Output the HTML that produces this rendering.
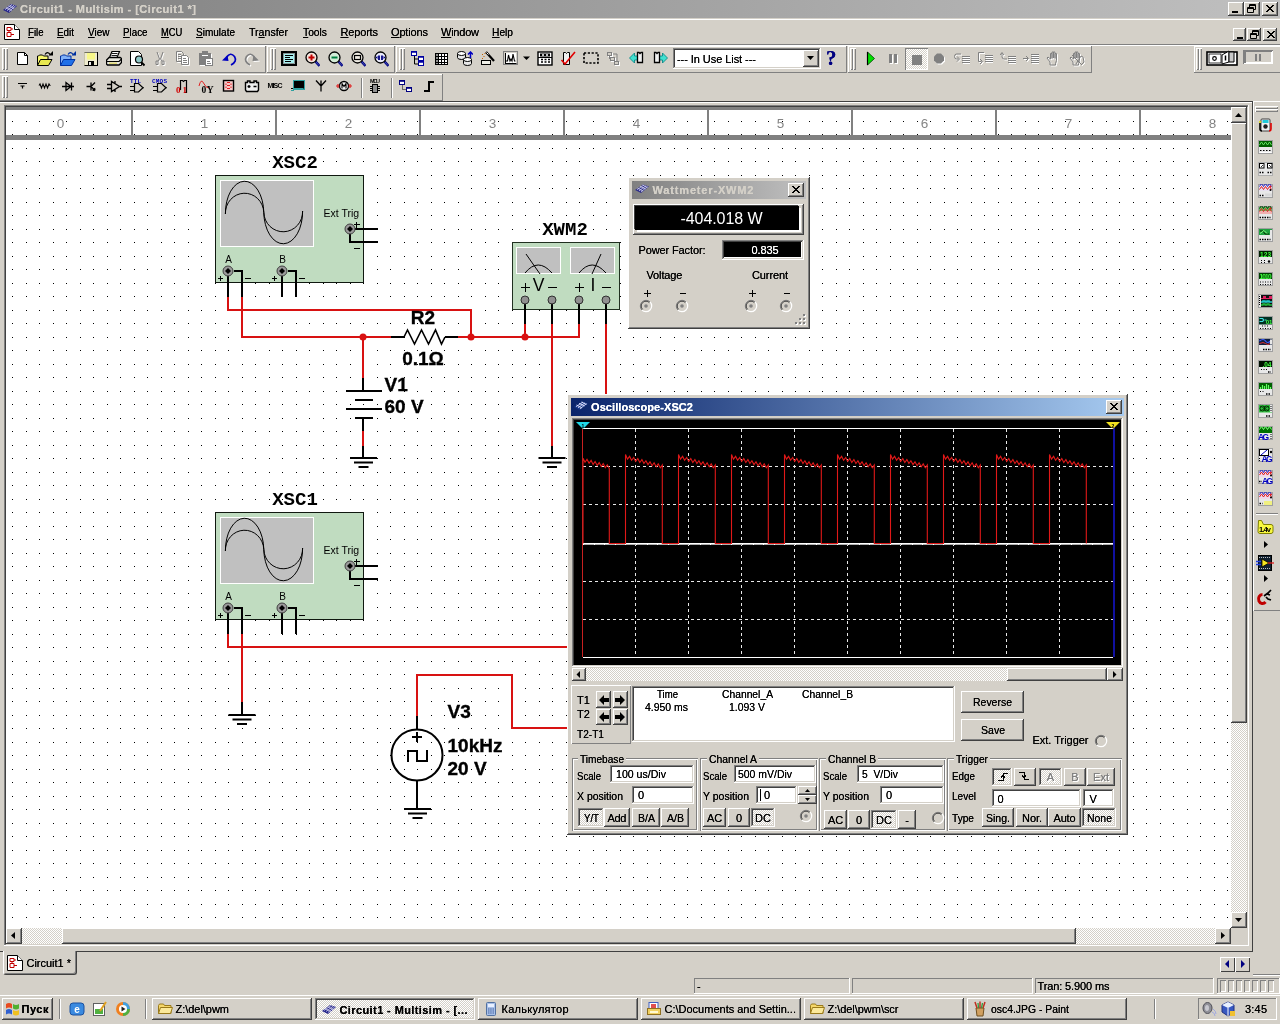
<!DOCTYPE html>
<html lang="ru"><head><meta charset="utf-8"><title>Circuit1 - Multisim</title><style>
html,body{margin:0;padding:0}
body{width:1280px;height:1024px;overflow:hidden;background:#D4D0C8;font-family:"Liberation Sans",sans-serif;font-size:11px;position:relative}
div,span.t,svg{position:absolute}
span.t{white-space:pre;text-shadow:0 0 0 currentColor}
span.t,svg text{opacity:0.999}
u{text-decoration:underline;text-underline-offset:1px}
.r{background:#D4D0C8;box-shadow:inset -1px -1px #404040,inset 1px 1px #fff,inset -2px -2px #808080,inset 2px 2px #D4D0C8}
.s{box-shadow:inset -1px -1px #fff,inset 1px 1px #808080,inset -2px -2px #D4D0C8,inset 2px 2px #404040}
.tb{box-shadow:inset -1px -1px #808080,inset 1px 1px #fff}
.ts{box-shadow:inset -1px -1px #fff,inset 1px 1px #808080}
</style></head>
<body>
<div style="left:0px;top:0px;width:1280px;height:18px;background:linear-gradient(90deg,#808080,#C0C0C0);"></div>
<svg style="left:2px;top:1px" width="16" height="16" viewBox="0 0 16 16"><path d="M1 9 L9 3 L15 5 L7 12 Z" fill="#28288c"/><path d="M3 8.5 L10 3.5 M5 9.5 L12 4.3 M7 10.5 L13.5 5" stroke="#d8d8f0" stroke-width="0.9" fill="none"/><path d="M4 6.5 L10 9.5 M6.5 4.8 L12 7.5" stroke="#d8d8f0" stroke-width="0.7" fill="none"/></svg>
<span class="t" style="font-size:11px;color:#D4D0C8;font-weight:bold;letter-spacing:0.46px;left:20.0px;top:4px;line-height:11px;">Circuit1 - Multisim - [Circuit1 *]</span>
<div class="r" style="left:1228px;top:2px;width:16px;height:14px;"><svg style="left:0;top:0" width="16" height="14" viewBox="0 0 16 14"><rect x="4" y="9" width="6" height="2" fill="#000"/></svg></div>
<div class="r" style="left:1244px;top:2px;width:16px;height:14px;"><svg style="left:0;top:0" width="16" height="14" viewBox="0 0 16 14"><path d="M5.5 2.5h6v5h-6z M5 3.5h7 M3.5 5.5h6v5h-6z M3 6.5h7" stroke="#000" stroke-width="1" fill="none"/><rect x="4" y="7" width="5" height="3" fill="#D4D0C8"/></svg></div>
<div class="r" style="left:1262px;top:2px;width:16px;height:14px;"><svg style="left:0;top:0" width="16" height="14" viewBox="0 0 16 14"><path d="M4 3 L11 10 M5 3 L12 10 M11 3 L4 10 M12 3 L5 10" stroke="#000" stroke-width="1" fill="none" shape-rendering="crispEdges"/></svg></div>
<div style="left:0px;top:18px;width:1280px;height:1px;background:#D4D0C8"></div>
<div style="left:0px;top:19px;width:1280px;height:1px;background:#fff"></div>
<svg style="left:4px;top:24px" width="16" height="16" viewBox="0 0 16 16"><path d="M0.5 0.5h10l5 5v10h-15z" fill="#fff" stroke="#000"/><path d="M10.5 0.5v5h5" fill="#fff" stroke="#000"/><path d="M3 3.5h4v3h-4z M5 6.5v2 M3 8.5h4v4h-4z M7 5h2 M7 10.5h3" stroke="#c00000" fill="none"/></svg>
<span class="t" style="font-size:11px;color:#000;transform:scaleX(0.874);transform-origin:0 0;left:27.5px;top:27px;line-height:11px;"><u>F</u>ile</span>
<span class="t" style="font-size:11px;color:#000;transform:scaleX(0.897);transform-origin:0 0;left:57.0px;top:27px;line-height:11px;"><u>E</u>dit</span>
<span class="t" style="font-size:11px;color:#000;transform:scaleX(0.909);transform-origin:0 0;left:87.5px;top:27px;line-height:11px;"><u>V</u>iew</span>
<span class="t" style="font-size:11px;color:#000;transform:scaleX(0.890);transform-origin:0 0;left:122.5px;top:27px;line-height:11px;"><u>P</u>lace</span>
<span class="t" style="font-size:11px;color:#000;transform:scaleX(0.854);transform-origin:0 0;left:160.6px;top:27px;line-height:11px;"><u>M</u>CU</span>
<span class="t" style="font-size:11px;color:#000;transform:scaleX(0.911);transform-origin:0 0;left:196.0px;top:27px;line-height:11px;"><u>S</u>imulate</span>
<span class="t" style="font-size:11px;color:#000;transform:scaleX(0.962);transform-origin:0 0;left:249.0px;top:27px;line-height:11px;">Tr<u>a</u>nsfer</span>
<span class="t" style="font-size:11px;color:#000;transform:scaleX(0.935);transform-origin:0 0;left:303.0px;top:27px;line-height:11px;"><u>T</u>ools</span>
<span class="t" style="font-size:11px;color:#000;letter-spacing:-0.19px;left:340.6px;top:27px;line-height:11px;"><u>R</u>eports</span>
<span class="t" style="font-size:11px;color:#000;letter-spacing:-0.15px;left:391.0px;top:27px;line-height:11px;"><u>O</u>ptions</span>
<span class="t" style="font-size:11px;color:#000;letter-spacing:-0.23px;left:441.0px;top:27px;line-height:11px;"><u>W</u>indow</span>
<span class="t" style="font-size:11px;color:#000;transform:scaleX(0.928);transform-origin:0 0;left:492.0px;top:27px;line-height:11px;"><u>H</u>elp</span>
<div class="r" style="left:1233px;top:28px;width:13px;height:13px;"><svg style="left:0;top:0" width="13" height="13" viewBox="0 0 13 13"><rect x="4" y="9" width="6" height="2" fill="#000"/></svg></div>
<div class="r" style="left:1247px;top:28px;width:14px;height:13px;"><svg style="left:0;top:0" width="14" height="13" viewBox="0 0 14 13"><path d="M5.5 2.5h6v5h-6z M5 3.5h7 M3.5 5.5h6v5h-6z M3 6.5h7" stroke="#000" stroke-width="1" fill="none"/><rect x="4" y="7" width="5" height="3" fill="#D4D0C8"/></svg></div>
<div class="r" style="left:1263px;top:28px;width:14px;height:13px;"><svg style="left:0;top:0" width="14" height="13" viewBox="0 0 14 13"><path d="M4 3 L11 10 M5 3 L12 10 M11 3 L4 10 M12 3 L5 10" stroke="#000" stroke-width="1" fill="none" shape-rendering="crispEdges"/></svg></div>
<div style="left:0px;top:44px;width:1280px;height:1px;background:#808080"></div>
<div style="left:0px;top:45px;width:1280px;height:1px;background:#fff"></div>
<div class="tb" style="left:-1px;top:46px;width:267px;height:27px;"></div>
<div style="left:2px;top:48px;width:3px;height:22px;box-shadow:inset 1px 1px #fff,inset -1px -1px #808080"></div><div style="left:5px;top:48px;width:3px;height:22px;box-shadow:inset 1px 1px #fff,inset -1px -1px #808080"></div>
<div class="tb" style="left:267px;top:46px;width:128px;height:27px;"></div>
<div style="left:270px;top:48px;width:3px;height:22px;box-shadow:inset 1px 1px #fff,inset -1px -1px #808080"></div><div style="left:273px;top:48px;width:3px;height:22px;box-shadow:inset 1px 1px #fff,inset -1px -1px #808080"></div>
<div class="tb" style="left:396px;top:46px;width:451px;height:27px;"></div>
<div style="left:399px;top:48px;width:3px;height:22px;box-shadow:inset 1px 1px #fff,inset -1px -1px #808080"></div><div style="left:402px;top:48px;width:3px;height:22px;box-shadow:inset 1px 1px #fff,inset -1px -1px #808080"></div>
<div class="tb" style="left:848px;top:46px;width:244px;height:27px;"></div>
<div style="left:850px;top:48px;width:3px;height:22px;box-shadow:inset 1px 1px #fff,inset -1px -1px #808080"></div><div style="left:853px;top:48px;width:3px;height:22px;box-shadow:inset 1px 1px #fff,inset -1px -1px #808080"></div>
<div class="tb" style="left:1194px;top:46px;width:87px;height:27px;"></div>
<div style="left:1196px;top:48px;width:3px;height:22px;box-shadow:inset 1px 1px #fff,inset -1px -1px #808080"></div><div style="left:1199px;top:48px;width:3px;height:22px;box-shadow:inset 1px 1px #fff,inset -1px -1px #808080"></div>
<div class="tb" style="left:-1px;top:74px;width:444px;height:27px;"></div>
<div style="left:2px;top:76px;width:3px;height:22px;box-shadow:inset 1px 1px #fff,inset -1px -1px #808080"></div><div style="left:5px;top:76px;width:3px;height:22px;box-shadow:inset 1px 1px #fff,inset -1px -1px #808080"></div>
<div style="left:361px;top:78px;width:1px;height:20px;background:#808080"></div>
<div style="left:362px;top:78px;width:1px;height:20px;background:#fff"></div>
<div style="left:391px;top:78px;width:1px;height:20px;background:#808080"></div>
<div style="left:392px;top:78px;width:1px;height:20px;background:#fff"></div>
<div style="left:0px;top:101px;width:1253px;height:1px;background:#404040"></div>
<div style="left:0px;top:102px;width:1252px;height:1px;background:#fff"></div>
<div class="s" style="left:673px;top:48px;width:148px;height:21px;background:#fff"></div>
<span class="t" style="font-size:11px;color:#000;letter-spacing:-0.06px;left:677.0px;top:54px;line-height:11px;">--- In Use List ---</span>
<div class="r" style="left:803px;top:50px;width:16px;height:17px;"><svg style="left:0;top:0" width="16" height="17"><path d="M4 6h7l-3.5 4z" fill="#000"/></svg></div>
<div style="left:905px;top:48px;width:23px;height:22px;background:repeating-conic-gradient(#fff 0% 25%,#D4D0C8 0% 50%) 0 0/2px 2px;box-shadow:inset 1px 1px #808080,inset -1px -1px #fff"></div>
<svg style="left:14px;top:51px" width="16" height="16" viewBox="0 0 16 16"><path d="M3.500 1.500h7l3 3v9h-10z" fill="#fff" stroke="#000"/><path d="M10.500 1.500v3h3" fill="none" stroke="#000"/></svg>
<svg style="left:37px;top:51px" width="16" height="16" viewBox="0 0 16 16"><path d="M0.500 14.500v-9.500h1l1-1h3l1 1h4.500v3" fill="#f8f870" stroke="#000"/><path d="M0.500 14.500l3-6h11.500l-3.500 6z" fill="#e8e850" stroke="#000"/><path d="M8 3.500q2.500-4 5.500 0.500" fill="none" stroke="#000" stroke-width="1.200"/><path d="M11.500 4.500h4.500v-4.500z" fill="#000"/></svg>
<svg style="left:60px;top:51px" width="16" height="16" viewBox="0 0 16 16"><path d="M0.500 14.500v-9.500h1l1-1h3l1 1h4.500v3" fill="#80b0f8" stroke="#0030a0"/><path d="M0.500 14.500l3-6h11.500l-3.500 6z" fill="#2070e8" stroke="#0030a0"/><path d="M8 3.500q2.500-4 5.500 0.500" fill="none" stroke="#0030a0" stroke-width="1.200"/><path d="M11.500 4.500h4.500v-4.500z" fill="#0030a0"/></svg>
<svg style="left:83px;top:51px" width="16" height="16" viewBox="0 0 16 16"><rect x="1.500" y="1.500" width="13" height="13" fill="#f0ecd0" stroke="#707060"/><path d="M14.500 1v14M1 14.500h14" stroke="#000"/><path d="M1.500 1.500v13" stroke="#c8c4a8"/><rect x="4" y="2" width="8" height="6.500" fill="#f8f888"/><rect x="5" y="10" width="6" height="4.500" fill="#000"/><rect x="6" y="11" width="2" height="3" fill="#e8e8e8"/></svg>
<svg style="left:106px;top:51px" width="16" height="16" viewBox="0 0 16 16"><path d="M3.500 6.500l2.500-6h7.500l-2.500 6z" fill="#fff" stroke="#000" stroke-width="1.200"/><path d="M6 2.500h5.500M5.500 4.500h5.500" stroke="#000" stroke-width="0.900"/><path d="M0.600 9l2.500-2.500h11l1.400 1v4l-2.500 2.500h-11.500l-1-1z" fill="#e8e8e0" stroke="#000" stroke-width="1.300"/><path d="M1 10.500h12M13 10.500l2.500-2.500" stroke="#000" stroke-width="1.100"/><path d="M3 12.200h8" stroke="#e0d860" stroke-width="1.200"/></svg>
<svg style="left:129px;top:51px" width="16" height="16" viewBox="0 0 16 16"><path d="M1.500 0.500h8l3 3v11h-11z" fill="#fff" stroke="#000"/><circle cx="10" cy="8.500" r="3.500" fill="#90c8c8" stroke="#000" stroke-width="1.200"/><path d="M12.500 11.500l3 3" stroke="#000" stroke-width="2"/></svg>
<svg style="left:152px;top:51px" width="16" height="16" viewBox="0 0 16 16"><path d="M5 1l2.500 7M11 1l-2.500 7M7.500 8l-1.500 2M8.500 8l1.500 2" transform="translate(1,1)" stroke="#fff" stroke-width="1" fill="none"/><path d="M5 1l2.500 7M11 1l-2.500 7M7.500 8l-1.500 2M8.500 8l1.500 2" stroke="#808080" stroke-width="1" fill="none"/><path d="M4 10h2v3.500h-2zM10 10h2v3.500h-2z" transform="translate(1,1)" stroke="#fff" stroke-width="1" fill="none"/><path d="M4 10h2v3.500h-2zM10 10h2v3.500h-2z" stroke="#808080" stroke-width="1" fill="none"/></svg>
<svg style="left:175px;top:51px" width="16" height="16" viewBox="0 0 16 16"><path d="M1.500 0.500h5l2 2v8h-7zM3 3.500h3M3 5.500h4M3 7.500h4" transform="translate(1,1)" stroke="#fff" stroke-width="1" fill="none"/><path d="M1.500 0.500h5l2 2v8h-7zM3 3.500h3M3 5.500h4M3 7.500h4" stroke="#808080" stroke-width="1" fill="none"/><path d="M6.500 4.500h5l2 2v7h-7z" fill="#fff"/><path d="M6.500 4.500h5l2 2v7h-7zM8 7.500h3M8 9.500h4M8 11.500h4" transform="translate(1,1)" stroke="#fff" stroke-width="1" fill="none"/><path d="M6.500 4.500h5l2 2v7h-7zM8 7.500h3M8 9.500h4M8 11.500h4" stroke="#808080" stroke-width="1" fill="none"/></svg>
<svg style="left:198px;top:51px" width="16" height="16" viewBox="0 0 16 16"><rect x="2" y="3" width="12" height="12" fill="#fff"/><rect x="1" y="2" width="12" height="12" fill="#808080"/><rect x="4.500" y="0.500" width="5" height="3" fill="#808080" stroke="#808080"/><path d="M4 4.500h6" stroke="#fff"/><rect x="7.500" y="7.500" width="7" height="7" fill="#fff" stroke="#808080"/><path d="M9 10.500h3M9 12.500h4" stroke="#808080"/></svg>
<svg style="left:221px;top:51px" width="16" height="16" viewBox="0 0 16 16"><path d="M5.500 6.500q4-6 8-1q3 5-3.500 8.500" fill="none" stroke="#0000c0" stroke-width="1.700"/><path d="M1 9.500l5.500-5.500l1 6z" fill="#0000c0"/></svg>
<svg style="left:244px;top:51px" width="16" height="16" viewBox="0 0 16 16"><path d="M11.500 7.500q-4-6-8-1q-3 5 3.500 8.500" fill="none" stroke="#fff" stroke-width="1.700"/><path d="M16 10.500l-5.500-5.500l-1 6z" fill="#fff"/><path d="M10.500 6.500q-4-6-8-1q-3 5 3.500 8.500" fill="none" stroke="#808080" stroke-width="1.700"/><path d="M15 9.500l-5.500-5.500l-1 6z" fill="#808080"/></svg>
<svg style="left:281px;top:51px" width="16" height="16" viewBox="0 0 16 16"><rect x="1" y="1" width="14" height="13" fill="#a8f0f0" stroke="#000" stroke-width="2"/><rect x="2.500" y="2.500" width="11" height="10" fill="none" stroke="#808080" stroke-width="0.800"/><path d="M4 4.500h8M4 6.500h5M4 8.500h8M4 10.500h6" stroke="#000" stroke-width="1.100"/></svg>
<svg style="left:304px;top:51px" width="16" height="16" viewBox="0 0 16 16"><path d="M11.500 10.500l4 4.500" stroke="#000080" stroke-width="2.600"/><path d="M12 11l3 3.500" stroke="#5060c0" stroke-width="0.800"/><circle cx="7.500" cy="6.500" r="5.500" fill="#f4e4dc" stroke="#000" stroke-width="1.300"/><path d="M4.500 6.500h6M7.500 3.500v6" stroke="#c00000" stroke-width="2"/></svg>
<svg style="left:327px;top:51px" width="16" height="16" viewBox="0 0 16 16"><path d="M11.500 10.500l4 4.500" stroke="#000080" stroke-width="2.600"/><path d="M12 11l3 3.500" stroke="#5060c0" stroke-width="0.800"/><circle cx="7.500" cy="6.500" r="5.500" fill="#d4ecd8" stroke="#000" stroke-width="1.300"/><path d="M4.500 6.500h6" stroke="#008040" stroke-width="2"/></svg>
<svg style="left:350px;top:51px" width="16" height="16" viewBox="0 0 16 16"><path d="M11.500 10.500l4 4.500" stroke="#000080" stroke-width="2.600"/><path d="M12 11l3 3.500" stroke="#5060c0" stroke-width="0.800"/><circle cx="7.500" cy="6.500" r="5.500" fill="#f0ece4" stroke="#000" stroke-width="1.300"/><rect x="4.500" y="4.500" width="6" height="4" fill="none" stroke="#000" stroke-width="1.200"/></svg>
<svg style="left:373px;top:51px" width="16" height="16" viewBox="0 0 16 16"><path d="M11.500 10.500l4 4.500" stroke="#000080" stroke-width="2.600"/><path d="M12 11l3 3.500" stroke="#5060c0" stroke-width="0.800"/><circle cx="7.500" cy="6.500" r="5.500" fill="#e8e8f8" stroke="#000" stroke-width="1.300"/><path d="M6 4.500v4.500M9 4.500v4.500" stroke="#000080" stroke-width="1.800"/><path d="M4.500 5l-2 1.500l2 1.500zM10.500 5l2 1.500l-2 1.500z" fill="#000080"/></svg>
<svg style="left:410px;top:51px" width="16" height="16" viewBox="0 0 16 16"><rect x="1.5" y="0.5" width="5" height="4" fill="#fff" stroke="#0000a0"/><path d="M1.5 1.0h5" stroke="#0000a0" stroke-width="1.500"/><rect x="8.5" y="5.5" width="5" height="4" fill="#fff" stroke="#0000a0"/><path d="M8.5 6.0h5" stroke="#0000a0" stroke-width="1.500"/><rect x="8.5" y="10.5" width="5" height="4" fill="#fff" stroke="#0000a0"/><path d="M8.5 11.0h5" stroke="#0000a0" stroke-width="1.500"/><path d="M4.500 5v8h4M4.500 8h4" fill="none" stroke="#000"/></svg>
<svg style="left:434px;top:51px" width="16" height="16" viewBox="0 0 16 16"><rect x="1" y="2" width="13" height="12" fill="#000"/><g fill="#fff"><rect x="5" y="3" width="2" height="2"/><rect x="8" y="3" width="2" height="2"/><rect x="11" y="3" width="2" height="2"/><rect x="5" y="6" width="2" height="2"/><rect x="8" y="6" width="2" height="2"/><rect x="11" y="6" width="2" height="2"/><rect x="5" y="9" width="2" height="2"/><rect x="8" y="9" width="2" height="2"/><rect x="11" y="9" width="2" height="2"/><rect x="5" y="12" width="2" height="1"/><rect x="8" y="12" width="2" height="1"/><rect x="11" y="12" width="2" height="1"/></g><g fill="#909090"><rect x="2" y="3" width="2" height="2"/><rect x="2" y="6" width="2" height="2"/><rect x="2" y="9" width="2" height="2"/><rect x="2" y="12" width="2" height="1"/></g></svg>
<svg style="left:457px;top:51px" width="16" height="16" viewBox="0 0 16 16"><path d="M0.5 2.5v4a4 2 0 0 0 8 0v-4" fill="#e8e8e8" stroke="#000"/><ellipse cx="4.5" cy="2.5" rx="4" ry="2" fill="#fff" stroke="#000"/><path d="M6.5 8.5v4a4 2 0 0 0 8 0v-4" fill="#e8e8e8" stroke="#000"/><ellipse cx="10.5" cy="8.5" rx="4" ry="2" fill="#fff" stroke="#000"/><path d="M13.500 7v-5M11 3.500l2.500-2.500l2.500 2.500" fill="none" stroke="#0000c0" stroke-width="1.500"/></svg>
<svg style="left:480px;top:51px" width="16" height="16" viewBox="0 0 16 16"><path d="M6 1l8 9" stroke="#000" stroke-width="2.200"/><path d="M6.500 1.500l2 2" stroke="#fff" stroke-width="1"/><rect x="1.500" y="9.500" width="9" height="4" fill="#f0f0e8" stroke="#000"/><path d="M2 3.500h1M3.500 5.500h1M2 7.500h1M4.500 2.500h1" stroke="#c06000"/></svg>
<svg style="left:503px;top:51px" width="16" height="16" viewBox="0 0 16 16"><rect x="0.500" y="0.500" width="14" height="13" fill="#d4d0c8" stroke="#808080"/><rect x="2" y="2" width="11" height="10" fill="#fff"/><path d="M2 12.500h11.500M2.500 2v10.500" stroke="#000"/><path d="M3 10l1.500 0l1-6l1.500 6l1-2l1 2l1-7l1.500 7h1" fill="none" stroke="#000" stroke-width="1.100"/></svg>
<svg style="left:522px;top:54px" width="9" height="8" viewBox="0 0 9 8"><path d="M1 2.500h7l-3.500 3.500z" fill="#000"/></svg>
<svg style="left:537px;top:51px" width="16" height="16" viewBox="0 0 16 16"><rect x="1" y="1" width="14" height="13" fill="#fff" stroke="#000" stroke-width="1.400"/><rect x="3" y="2.500" width="10" height="3" fill="#000"/><circle cx="6" cy="4" r="1" fill="#fff"/><circle cx="10" cy="4" r="1" fill="#fff"/><path d="M1 6.500h14" stroke="#000"/><path d="M4 8.500h2M7.500 8.500h2M11 8.500h2M4 11h2M7.500 11h2M11 11h2" stroke="#000" stroke-width="1.600"/></svg>
<svg style="left:560px;top:51px" width="16" height="16" viewBox="0 0 16 16"><path d="M3.500 1.500h2l1 1l1-1h2v12h-6z" fill="#f0f0f0" stroke="#000"/><path d="M1.500 9l3.500 4l10-12" fill="none" stroke="#e00000" stroke-width="1.600"/></svg>
<svg style="left:583px;top:51px" width="16" height="16" viewBox="0 0 16 16"><rect x="1" y="2" width="14" height="10" fill="none" stroke="#000" stroke-width="1.600" stroke-dasharray="2.200 1.600"/></svg>
<svg style="left:606px;top:51px" width="16" height="16" viewBox="0 0 16 16"><rect x="2.5" y="2.5" width="4" height="3" fill="none" stroke="#fff"/><rect x="1.5" y="1.5" width="4" height="3" fill="#d4d0c8" stroke="#808080"/><rect x="5.5" y="7.5" width="4" height="3" fill="none" stroke="#fff"/><rect x="4.5" y="6.5" width="4" height="3" fill="#d4d0c8" stroke="#808080"/><rect x="9.5" y="11.5" width="4" height="3" fill="none" stroke="#fff"/><rect x="8.5" y="10.5" width="4" height="3" fill="#d4d0c8" stroke="#808080"/><path d="M7 3h4v7" fill="none" stroke="#808080"/><path d="M3.500 5v3" stroke="#808080"/></svg>
<svg style="left:629px;top:51px" width="16" height="16" viewBox="0 0 16 16"><path d="M0.500 7l5-5v3h4v4h-4v3z" fill="#40e0d0" stroke="#008080" stroke-width="0.800"/><path d="M8.500 1.500h1.500l1 1l1-1h1.500v10h-5z" fill="#f0f0f0" stroke="#000" stroke-width="1.300"/></svg>
<svg style="left:652px;top:51px" width="16" height="16" viewBox="0 0 16 16"><path d="M15.500 7l-5-5v3h-4v4h4v3z" fill="#40e0d0" stroke="#008080" stroke-width="0.800"/><path d="M2.500 1.500h1.500l1 1l1-1h1.500v10h-5z" fill="#f0f0f0" stroke="#000" stroke-width="1.300"/></svg>
<span class="t" style="font-size:21px;color:#000080;font-weight:bold;left:826.1px;top:48px;line-height:21px;font-family:'Liberation Serif',serif;">?</span>
<svg style="left:866px;top:51px" width="10" height="16" viewBox="0 0 10 16"><path d="M1.500 1l7 6.500l-7 6.500z" fill="#00e000" stroke="#004000" stroke-width="0.800"/><path d="M1.500 1v13" stroke="#000" stroke-width="1.200"/></svg>
<svg style="left:888px;top:53px" width="11" height="12" viewBox="0 0 11 12"><rect x="2" y="2" width="3" height="9" fill="#fff"/><rect x="7" y="2" width="3" height="9" fill="#fff"/><rect x="1" y="1" width="3" height="9" fill="#808080"/><rect x="6" y="1" width="3" height="9" fill="#808080"/></svg>
<svg style="left:911px;top:54px" width="12" height="12" viewBox="0 0 12 12"><rect x="1" y="1" width="10" height="10" fill="#808080"/></svg>
<svg style="left:932px;top:51px" width="15" height="16" viewBox="0 0 15 16"><path d="M6 3.500h4l3 3v4l-3 3h-4l-3-3v-4z" fill="#fff"/><path d="M5 2.500h4l3 3v4l-3 3h-4l-3-3v-4z" fill="#808080"/></svg>
<svg style="left:954px;top:51px" width="16" height="16" viewBox="0 0 16 16"><path d="M7 3h-4.500q-2 0-2 2.500t2 2.500h2M3 5.500l2.500 2.500l-2.500 2.500 M8 5.500h8M8 7.500h8M8 9.500h8M8 11.500h8" transform="translate(1,1)" stroke="#fff" stroke-width="1" fill="none"/><path d="M7 3h-4.500q-2 0-2 2.500t2 2.500h2M3 5.500l2.500 2.500l-2.500 2.500 M8 5.500h8M8 7.500h8M8 9.500h8M8 11.500h8" stroke="#808080" stroke-width="1" fill="none"/></svg>
<svg style="left:977px;top:51px" width="16" height="16" viewBox="0 0 16 16"><path d="M7 1.500h-5.500v9h3M3 8l2.500 2.500l-2.500 2.500 M8 4.500h8M8 6.500h8M8 8.500h8M8 10.500h8" transform="translate(1,1)" stroke="#fff" stroke-width="1" fill="none"/><path d="M7 1.500h-5.500v9h3M3 8l2.500 2.500l-2.500 2.500 M8 4.500h8M8 6.500h8M8 8.500h8M8 10.500h8" stroke="#808080" stroke-width="1" fill="none"/></svg>
<svg style="left:1000px;top:51px" width="16" height="16" viewBox="0 0 16 16"><path d="M7 8h-3q-2 0-2-2.500v-3.500M0 4l2-2.500l2 2.500 M8 5.500h8M8 7.500h8M8 9.500h8M8 11.500h8" transform="translate(1,1)" stroke="#fff" stroke-width="1" fill="none"/><path d="M7 8h-3q-2 0-2-2.500v-3.500M0 4l2-2.500l2 2.500 M8 5.500h8M8 7.500h8M8 9.500h8M8 11.500h8" stroke="#808080" stroke-width="1" fill="none"/></svg>
<svg style="left:1023px;top:51px" width="16" height="16" viewBox="0 0 16 16"><path d="M0 7.500h5M3 5l2.500 2.500l-2.500 2.500 M8 3.500h8M8 5.500h8M8 7.500h8M8 9.500h8M8 11.500h8" transform="translate(1,1)" stroke="#fff" stroke-width="1" fill="none"/><path d="M0 7.500h5M3 5l2.500 2.500l-2.500 2.500 M8 3.500h8M8 5.500h8M8 7.500h8M8 9.500h8M8 11.500h8" stroke="#808080" stroke-width="1" fill="none"/></svg>
<svg style="left:1046px;top:51px" width="16" height="16" viewBox="0 0 16 16"><path d="M4 14v-3l-3-4l1-1l2.500 2v-5.500h1.500v5v-6.500h1.500v6v-6h1.500v6.500v-5h1.500v7l-1 3v1.500z" transform="translate(1,1)" stroke="#fff" stroke-width="1" fill="none"/><path d="M4 14v-3l-3-4l1-1l2.500 2v-5.500h1.500v5v-6.500h1.500v6v-6h1.500v6.500v-5h1.500v7l-1 3v1.500z" stroke="#808080" stroke-width="1" fill="none"/></svg>
<svg style="left:1069px;top:51px" width="16" height="16" viewBox="0 0 16 16"><path d="M4 14v-3l-3-4l1-1l2.500 2v-5.500h1.500v5v-6.500h1.500v6v-6h1.500v6.500v-5h1.500v7l-1 3v1.500z M7 13l5-8l2 1l1 5l-3 3 M3 4l9 9" transform="translate(1,1)" stroke="#fff" stroke-width="1" fill="none"/><path d="M4 14v-3l-3-4l1-1l2.500 2v-5.500h1.500v5v-6.500h1.500v6v-6h1.500v6.500v-5h1.500v7l-1 3v1.500z M7 13l5-8l2 1l1 5l-3 3 M3 4l9 9" stroke="#808080" stroke-width="1" fill="none"/></svg>
<svg style="left:1206px;top:50px" width="32" height="17" viewBox="0 0 32 17"><rect x="1" y="2" width="30" height="13" fill="#fff" stroke="#000" stroke-width="1.600"/><rect x="3" y="4" width="12" height="9" fill="#fff" stroke="#000" stroke-width="0.800"/><circle cx="8.500" cy="8.500" r="1.800" fill="none" stroke="#000" stroke-width="1.200"/><path d="M16 5l7-4v11l-7 2z" fill="#fff" stroke="#000"/><path d="M19.500 5.500v5" stroke="#000" stroke-width="1.500"/><path d="M23 2h5v10h-5z" fill="#c8c8c8" stroke="#000"/></svg>
<div style="left:1243px;top:50px;width:30px;height:14px;box-shadow:inset 1px 1px #808080,inset -1px -1px #fff,inset 3px 2px #808080,inset -2px -2px #fff"></div>
<div style="left:1255px;top:54px;width:2px;height:7px;background:#808080"></div>
<div style="left:1259px;top:54px;width:2px;height:7px;background:#808080"></div>
<svg style="left:14px;top:78px" width="16" height="16" viewBox="0 0 16 16"><path d="M4 5.500h9M6.500 8h4M8.500 8v2.500" fill="none" stroke="#000" stroke-width="1.2"/></svg>
<svg style="left:37px;top:78px" width="16" height="16" viewBox="0 0 16 16"><path d="M2 7.500l1-1.500l1.500 4l1.500-4l1.500 4l1.500-4l1.500 4l1.500-4l1 1.500h0.500" fill="none" stroke="#000" stroke-width="1.1"/></svg>
<svg style="left:60px;top:78px" width="16" height="16" viewBox="0 0 16 16"><path d="M2 8.500h12M6 4.500v8l5-4zM11.500 4.500v8" fill="none" stroke="#000" stroke-width="1.3"/></svg>
<svg style="left:83px;top:78px" width="16" height="16" viewBox="0 0 16 16"><path d="M3.500 8.500h4.500M8 4.500v8M8 8.500l4-4M8 8.500l4 4M12 12.500l-2.500-0.500M12 12.500l-0.500-2.500" fill="none" stroke="#000" stroke-width="1.3"/></svg>
<svg style="left:106px;top:78px" width="16" height="16" viewBox="0 0 16 16"><path d="M1 6.500h4M1 10.500h4M5.500 3.500v10l8-5zM13.500 8.500h2.500M9 3v2.500M9 14v-2.500" fill="none" stroke="#000" stroke-width="1.3"/></svg>
<svg style="left:129px;top:78px" width="16" height="16" viewBox="0 0 16 16"><path d="M1 8.500h4M1 12.500h4M5.500 5.500v8.500h4l4.500-4.250l-4.500-4.250zM14 9.750h1" fill="none" stroke="#000" stroke-width="1.2"/><text x="1" y="4.500" font-size="6" font-weight="bold" fill="#0000c0" font-family="Liberation Mono, monospace" textLength="11">TTL</text></svg>
<svg style="left:152px;top:78px" width="16" height="16" viewBox="0 0 16 16"><path d="M1 8.500h4M1 12.500h4M5.500 5.500v8.500h4l4.500-4.250l-4.500-4.250zM14 9.750h1" fill="none" stroke="#000" stroke-width="1.2"/><text x="0" y="4.500" font-size="6" font-weight="bold" fill="#0000c0" font-family="Liberation Mono, monospace" textLength="15">CMOS</text></svg>
<svg style="left:175px;top:79px" width="16" height="16" viewBox="0 0 16 16"><path d="M5.500 11v-9.500h2l1 1l1-1h2v12h-2" fill="none" stroke="#000" stroke-width="1.2"/><text x="1" y="14" font-size="9" font-weight="bold" fill="#d00000" font-family="Liberation Serif, serif" textLength="11">01</text></svg>
<svg style="left:198px;top:79px" width="16" height="16" viewBox="0 0 16 16"><path d="M1 7q2-8 4.500-3t5 5" fill="none" stroke="#e02020" stroke-width="1"/><text x="3.500" y="14" font-size="9.500" font-weight="bold" fill="#000" font-family="Liberation Serif, serif" textLength="12">0Y</text></svg>
<svg style="left:221px;top:79px" width="16" height="16" viewBox="0 0 16 16"><rect x="2.500" y="1.500" width="10" height="10.500" fill="#f4c8c8" stroke="#000" stroke-width="1.400"/><path d="M6 3.500h3M6 6.500h3M6 9.500h3M5 4.500v1.500M10 4.500v1.500M5 7.500v1.500M10 7.500v1.500" fill="none" stroke="#e02020" stroke-width="1"/></svg>
<svg style="left:244px;top:79px" width="16" height="16" viewBox="0 0 16 16"><path d="M1.500 3.500h2v-1.500h2.500v1.500h4v-1.500h2.500v1.500h2v7.500l-1 1.500h-11l-1-1.500z" fill="#f0f0f0" stroke="#000" stroke-width="1.400"/><path d="M3.500 7.500h3M5 6v3M9.500 7.500h3" fill="none" stroke="#000" stroke-width="1.3"/></svg>
<svg style="left:267px;top:78px" width="16" height="16" viewBox="0 0 16 16"><text x="0.500" y="9.500" font-size="7" font-weight="bold" fill="#000" font-family="Liberation Sans, sans-serif" textLength="15">MISC</text></svg>
<svg style="left:290px;top:79px" width="16" height="16" viewBox="0 0 16 16"><rect x="3.500" y="1.500" width="11" height="9" fill="#000" stroke="#30a0a0" stroke-width="1"/><path d="M1 11.500h3M3.500 9.500h10" stroke="#30a0a0"/><path d="M1 9.500h2" stroke="#000"/></svg>
<svg style="left:313px;top:79px" width="16" height="16" viewBox="0 0 16 16"><path d="M8 1.500v11M8 7l-5-5.500M8 7l5-5.500" fill="none" stroke="#000" stroke-width="1.3"/></svg>
<svg style="left:336px;top:79px" width="16" height="16" viewBox="0 0 16 16"><circle cx="8" cy="7" r="4.500" fill="#f0f0f0" stroke="#000" stroke-width="1.300"/><path d="M0 7h3.500M12.500 7h3.500M2 5v4M14 5v4" fill="none" stroke="#e02020" stroke-width="1.2"/><path d="M6 9.500v-5l2 3l2-3v5" fill="none" stroke="#000" stroke-width="1.1"/></svg>
<svg style="left:367px;top:78px" width="16" height="16" viewBox="0 0 16 16"><text x="8" y="4.500" font-size="5.500" font-weight="bold" text-anchor="middle" font-family="Liberation Sans, sans-serif" textLength="10">MCU</text><rect x="5.500" y="6.500" width="5" height="8" fill="#909090" stroke="#000"/><path d="M3 8.500h2M3 10.500h2M3 12.500h2M11 8.500h2M11 10.500h2M11 12.500h2" fill="none" stroke="#000" stroke-width="1.2"/></svg>
<svg style="left:398px;top:79px" width="16" height="16" viewBox="0 0 16 16"><rect x="1.5" y="1.5" width="5" height="4" fill="#fff" stroke="#000080"/><path d="M1.5 2.0h5" stroke="#000080" stroke-width="1.600"/><rect x="8.5" y="8.5" width="5" height="4" fill="#fff" stroke="#000080"/><path d="M8.5 9.0h5" stroke="#000080" stroke-width="1.600"/><path d="M4.500 6.500v4h4" fill="none" stroke="#000" stroke-dasharray="1 1"/></svg>
<svg style="left:421px;top:79px" width="16" height="16" viewBox="0 0 16 16"><path d="M13 3h-5v9h-5" fill="none" stroke="#000" stroke-width="2.200" shape-rendering="crispEdges"/></svg>
<div style="left:4px;top:105px;width:1244px;height:840px;background:#808080"></div>
<div style="left:5px;top:106px;width:1242px;height:838px;background:#404040"></div>
<div style="left:6px;top:107px;width:1241px;height:837px;background:#D4D0C8"></div>
<div style="left:6px;top:944px;width:1242px;height:1px;background:#D4D0C8"></div>
<div style="left:1247px;top:107px;width:1px;height:838px;background:#D4D0C8"></div>
<div style="left:4px;top:945px;width:1245px;height:1px;background:#fff"></div>
<div style="left:1248px;top:105px;width:1px;height:841px;background:#fff"></div>
<div style="left:77px;top:951px;width:1176px;height:1px;background:#404040"></div>
<div style="left:0px;top:951px;width:3px;height:1px;background:#404040"></div>
<div style="left:1252px;top:102px;width:1px;height:850px;background:#404040"></div>
<svg style="left:6px;top:107px" width="1225" height="821" viewBox="6 107 1225 821">
<defs><pattern id="gd" width="27" height="27" patternUnits="userSpaceOnUse"><rect x="12" y="13" width="1" height="1" fill="#000"/><rect x="26" y="13" width="1" height="1" fill="#000"/><rect x="12" y="26" width="1" height="1" fill="#000"/><rect x="26" y="26" width="1" height="1" fill="#000"/></pattern></defs>
<rect x="6" y="107" width="1225" height="821" fill="#fff"/>
<g shape-rendering="crispEdges">
<rect x="6" y="107" width="1225" height="821" fill="url(#gd)"/>
<rect x="6" y="107" width="1225" height="3" fill="#808080"/>
<rect x="6" y="135" width="1225" height="5" fill="#808080"/>
<rect x="131" y="110" width="2" height="25" fill="#808080"/>
<rect x="275" y="110" width="2" height="25" fill="#808080"/>
<rect x="419" y="110" width="2" height="25" fill="#808080"/>
<rect x="563" y="110" width="2" height="25" fill="#808080"/>
<rect x="707" y="110" width="2" height="25" fill="#808080"/>
<rect x="851" y="110" width="2" height="25" fill="#808080"/>
<rect x="995" y="110" width="2" height="25" fill="#808080"/>
<rect x="1139" y="110" width="2" height="25" fill="#808080"/>
</g>
<text x="60.5" y="128" font-size="13.5" fill="#858585" text-anchor="middle" font-family="Liberation Sans, sans-serif">0</text>
<text x="204.5" y="128" font-size="13.5" fill="#858585" text-anchor="middle" font-family="Liberation Sans, sans-serif">1</text>
<text x="348.5" y="128" font-size="13.5" fill="#858585" text-anchor="middle" font-family="Liberation Sans, sans-serif">2</text>
<text x="492.5" y="128" font-size="13.5" fill="#858585" text-anchor="middle" font-family="Liberation Sans, sans-serif">3</text>
<text x="636.5" y="128" font-size="13.5" fill="#858585" text-anchor="middle" font-family="Liberation Sans, sans-serif">4</text>
<text x="780.5" y="128" font-size="13.5" fill="#858585" text-anchor="middle" font-family="Liberation Sans, sans-serif">5</text>
<text x="924.5" y="128" font-size="13.5" fill="#858585" text-anchor="middle" font-family="Liberation Sans, sans-serif">6</text>
<text x="1068.5" y="128" font-size="13.5" fill="#858585" text-anchor="middle" font-family="Liberation Sans, sans-serif">7</text>
<text x="1212.5" y="128" font-size="13.5" fill="#858585" text-anchor="middle" font-family="Liberation Sans, sans-serif">8</text>
<rect x="215.5" y="175.5" width="148" height="107" fill="#C0DCC0" stroke="#101810" shape-rendering="crispEdges"/>
<rect x="220.5" y="180.5" width="93" height="66" fill="#C0C0C0" stroke="#fff" shape-rendering="crispEdges"/>
<path d="M225.4 214 A19.2 32 0 0 1 263.8 212.5 A19.4 32 0 0 0 302.6 211" fill="none" stroke="#000" stroke-width="1"/>
<path d="M225.4 214 A19.2 20 0 0 1 263.8 212.5 A19.4 20 0 0 0 302.6 211" fill="none" stroke="#000" stroke-width="1"/>
<text x="295" y="168" font-size="19" text-anchor="middle" font-weight="bold" font-family="Liberation Mono, monospace" fill="#000">XSC2</text>
<text x="228.5" y="262.5" font-size="10" text-anchor="middle" font-family="Liberation Sans, sans-serif" fill="#000">A</text>
<text x="282.5" y="262.5" font-size="10" text-anchor="middle" font-family="Liberation Sans, sans-serif" fill="#000">B</text>
<text x="323.5" y="216.5" font-size="10.5" text-anchor="start" font-family="Liberation Sans, sans-serif" fill="#000">Ext Trig</text>
<g stroke="#000" stroke-width="2" fill="none" shape-rendering="crispEdges">
<path d="M228 271V297 M234 271H242V297 M282 271V297 M288 271H296V297"/>
<path d="M350 229H378 M350 229V242H378"/>
</g>
<circle cx="228" cy="271" r="5" fill="#9a9a9a" stroke="#404040" stroke-width="1"/><path d="M225 271L228 268L231 271L228 274z" fill="#000"/>
<circle cx="282" cy="271" r="5" fill="#9a9a9a" stroke="#404040" stroke-width="1"/><path d="M279 271L282 268L285 271L282 274z" fill="#000"/>
<circle cx="350" cy="229" r="5" fill="#9a9a9a" stroke="#404040" stroke-width="1"/><path d="M347 229L350 226L353 229L350 232z" fill="#000"/>
<g stroke="#000" stroke-width="1" shape-rendering="crispEdges">
<path d="M218 278.5h5 M220.5 276v5"/>
<path d="M272 278.5h5 M274.5 276v5"/>
<path d="M245 278.5h6"/>
<path d="M299 278.5h6"/>
<path d="M354 224.5h6 M356.5 222v6 M354 248.5h6"/>
</g>
<rect x="215.5" y="512.5" width="148" height="107" fill="#C0DCC0" stroke="#101810" shape-rendering="crispEdges"/>
<rect x="220.5" y="517.5" width="93" height="66" fill="#C0C0C0" stroke="#fff" shape-rendering="crispEdges"/>
<path d="M225.4 551 A19.2 32 0 0 1 263.8 549.5 A19.4 32 0 0 0 302.6 548" fill="none" stroke="#000" stroke-width="1"/>
<path d="M225.4 551 A19.2 20 0 0 1 263.8 549.5 A19.4 20 0 0 0 302.6 548" fill="none" stroke="#000" stroke-width="1"/>
<text x="295" y="505" font-size="19" text-anchor="middle" font-weight="bold" font-family="Liberation Mono, monospace" fill="#000">XSC1</text>
<text x="228.5" y="599.5" font-size="10" text-anchor="middle" font-family="Liberation Sans, sans-serif" fill="#000">A</text>
<text x="282.5" y="599.5" font-size="10" text-anchor="middle" font-family="Liberation Sans, sans-serif" fill="#000">B</text>
<text x="323.5" y="553.5" font-size="10.5" text-anchor="start" font-family="Liberation Sans, sans-serif" fill="#000">Ext Trig</text>
<g stroke="#000" stroke-width="2" fill="none" shape-rendering="crispEdges">
<path d="M228 608V634 M234 608H242V634 M282 608V634 M288 608H296V634"/>
<path d="M350 566H378 M350 566V579H378"/>
</g>
<circle cx="228" cy="608" r="5" fill="#9a9a9a" stroke="#404040" stroke-width="1"/><path d="M225 608L228 605L231 608L228 611z" fill="#000"/>
<circle cx="282" cy="608" r="5" fill="#9a9a9a" stroke="#404040" stroke-width="1"/><path d="M279 608L282 605L285 608L282 611z" fill="#000"/>
<circle cx="350" cy="566" r="5" fill="#9a9a9a" stroke="#404040" stroke-width="1"/><path d="M347 566L350 563L353 566L350 569z" fill="#000"/>
<g stroke="#000" stroke-width="1" shape-rendering="crispEdges">
<path d="M218 615.5h5 M220.5 613v5"/>
<path d="M272 615.5h5 M274.5 613v5"/>
<path d="M245 615.5h6"/>
<path d="M299 615.5h6"/>
<path d="M354 561.5h6 M356.5 559v6 M354 585.5h6"/>
</g>
<rect x="512.5" y="242.5" width="107" height="67" fill="#C0DCC0" stroke="#203020" shape-rendering="crispEdges"/>
<rect x="516.5" y="247.5" width="44" height="26" fill="#C0C0C0" stroke="#fff" shape-rendering="crispEdges"/>
<rect x="570.5" y="247.5" width="44" height="26" fill="#C0C0C0" stroke="#fff" shape-rendering="crispEdges"/>
<path d="M525 273 Q538 257 552 273 M526 254 L540 274" fill="none" stroke="#000"/>
<path d="M579 273 Q592 257 606 273 M601 254 L592 274" fill="none" stroke="#000"/>
<text x="565" y="235" font-size="19" text-anchor="middle" font-weight="bold" font-family="Liberation Mono, monospace" fill="#000">XWM2</text>
<text x="538.5" y="291" font-size="17.5" text-anchor="middle" font-family="Liberation Sans, sans-serif" fill="#000">V</text>
<text x="593" y="291" font-size="17.5" text-anchor="middle" font-family="Liberation Sans, sans-serif" fill="#000">I</text>
<g stroke="#000" stroke-width="1" shape-rendering="crispEdges">
<path d="M521 287.5h9 M525.5 283v9"/>
<path d="M575 287.5h9 M579.5 283v9"/>
<path d="M548 287.5h9"/>
<path d="M602 287.5h9"/>
</g>
<g stroke="#000" stroke-width="2" fill="none" shape-rendering="crispEdges">
<path d="M525 301V324"/>
<path d="M552 301V324"/>
<path d="M579 301V324"/>
<path d="M606 301V324"/>
<path d="M391 337H404 M445 337H458"/>
<path d="M363 378V390 M346 390.5H382 M355 400H373 M346 409H382 M355 418H373 M363 418V431 M363 446V458"/>
<path d="M552 446V458"/>
<path d="M242 702V715"/>
<path d="M417 716V729 M417 781V809"/>
</g>
<circle cx="525" cy="300" r="4" fill="#909090" stroke="#303030"/>
<circle cx="552" cy="300" r="4" fill="#909090" stroke="#303030"/>
<circle cx="579" cy="300" r="4" fill="#909090" stroke="#303030"/>
<circle cx="606" cy="300" r="4" fill="#909090" stroke="#303030"/>
<path d="M404 337 L407.5 330 L414.5 344 L421.5 330 L428.5 344 L435.5 330 L441.5 344 L445 337" fill="none" stroke="#000" stroke-width="1.6"/>
<g stroke="#D81212" stroke-width="2" fill="none" shape-rendering="crispEdges">
<path d="M228 297V310H471V337"/>
<path d="M242 297V337H391"/>
<path d="M363 337V378"/>
<path d="M458 337H579V324"/>
<path d="M525 324V337"/>
<path d="M552 324V446"/>
<path d="M606 324V400"/>
<path d="M363 431V446"/>
<path d="M228 634V647H570"/>
<path d="M242 634V702"/>
<path d="M417 716V675H512V728H570"/>
</g>
<circle cx="363" cy="337" r="3.5" fill="#D81212"/>
<circle cx="471" cy="337" r="3.5" fill="#D81212"/>
<circle cx="525" cy="337" r="3.5" fill="#D81212"/>
<path d="M350.0 458h27 M354.0 462.5h19 M358.5 467h10" stroke="#000" stroke-width="1.8" fill="none"/>
<path d="M538.5 458h27 M542.5 462.5h19 M547.0 467h10" stroke="#000" stroke-width="1.8" fill="none"/>
<path d="M228.5 715h27 M232.5 719.5h19 M237.0 724h10" stroke="#000" stroke-width="1.8" fill="none"/>
<path d="M404.0 809h27 M408.0 813.5h19 M412.5 818h10" stroke="#000" stroke-width="1.8" fill="none"/>
<text x="423" y="323.5" font-size="19" text-anchor="middle" font-weight="bold" stroke="#000" stroke-width="0.35" font-family="Liberation Sans, sans-serif" fill="#000">R2</text>
<text x="423" y="364.5" font-size="19" text-anchor="middle" font-weight="bold" stroke="#000" stroke-width="0.35" font-family="Liberation Sans, sans-serif" fill="#000">0.1Ω</text>
<text x="384.5" y="391" font-size="19" text-anchor="start" font-weight="bold" stroke="#000" stroke-width="0.35" font-family="Liberation Sans, sans-serif" fill="#000">V1</text>
<text x="384.5" y="412.5" font-size="19" text-anchor="start" font-weight="bold" stroke="#000" stroke-width="0.35" font-family="Liberation Sans, sans-serif" fill="#000">60 V</text>
<text x="447.5" y="718" font-size="19" text-anchor="start" font-weight="bold" stroke="#000" stroke-width="0.35" font-family="Liberation Sans, sans-serif" fill="#000">V3</text>
<text x="447.5" y="752" font-size="19" text-anchor="start" font-weight="bold" stroke="#000" stroke-width="0.35" font-family="Liberation Sans, sans-serif" fill="#000">10kHz</text>
<text x="447.5" y="775" font-size="19" text-anchor="start" font-weight="bold" stroke="#000" stroke-width="0.35" font-family="Liberation Sans, sans-serif" fill="#000">20 V</text>
<circle cx="417" cy="755" r="25.5" fill="none" stroke="#000" stroke-width="2"/>
<path d="M412 737h10 M417 732v10" stroke="#000" stroke-width="2" shape-rendering="crispEdges"/>
<path d="M408 762V751H417V761H427V750" fill="none" stroke="#000" stroke-width="2" shape-rendering="crispEdges"/>
</svg>
<div style="left:1231px;top:107px;width:16px;height:821px;background:repeating-conic-gradient(#fff 0% 25%,#D4D0C8 0% 50%) 0 0/2px 2px;"></div>
<div class="r" style="left:1231px;top:107px;width:16px;height:16px;"><svg style="left:0;top:0" width="16" height="16"><path d="M4 10h7l-3.5-4z" fill="#000"/></svg></div>
<div class="r" style="left:1231px;top:123px;width:16px;height:600px;"></div>
<div class="r" style="left:1231px;top:912px;width:16px;height:16px;"><svg style="left:0;top:0" width="16" height="16"><path d="M4 6h7l-3.5 4z" fill="#000"/></svg></div>
<div style="left:6px;top:928px;width:1225px;height:16px;background:repeating-conic-gradient(#fff 0% 25%,#D4D0C8 0% 50%) 0 0/2px 2px;"></div>
<div class="r" style="left:6px;top:928px;width:16px;height:16px;"><svg style="left:0;top:0" width="16" height="16"><path d="M9 4v7l-4-3.5z" fill="#000"/></svg></div>
<div class="r" style="left:62px;top:928px;width:1014px;height:16px;"></div>
<div class="r" style="left:1215px;top:928px;width:16px;height:16px;"><svg style="left:0;top:0" width="16" height="16"><path d="M6 4v7l4-3.5z" fill="#000"/></svg></div>
<div style="left:1231px;top:928px;width:16px;height:16px;background:#D4D0C8"></div>
<div style="left:1253px;top:101px;width:27px;height:510px;box-shadow:inset 1px 1px #fff,inset 0 -1px #808080"></div>
<div style="left:1255px;top:106px;width:23px;height:3px;box-shadow:inset 1px 1px #fff,inset -1px -1px #808080"></div>
<div style="left:1255px;top:109px;width:23px;height:3px;box-shadow:inset 1px 1px #fff,inset -1px -1px #808080"></div>
<svg style="left:1258px;top:118px" width="15" height="14" viewBox="0 0 15 14"><rect x="3" y="1" width="9" height="12" rx="1" fill="#f0f0f0" stroke="#404040"/><rect x="4.500" y="2" width="6" height="3" fill="#20c8d8"/><circle cx="7.500" cy="8.500" r="2.200" fill="#202020"/><path d="M2 5v6q0 2 2 2" fill="none" stroke="#000" stroke-width="1.600"/><path d="M13 5v6q0 2-2 2" fill="none" stroke="#e00000" stroke-width="1.600"/><path d="M1 4h2" stroke="#e0e000" stroke-width="1.500"/></svg>
<svg style="left:1258px;top:140px" width="15" height="14" viewBox="0 0 15 14"><rect x="0.500" y="0.500" width="14" height="13" fill="#e8e8e8" stroke="#a0a0a0"/><rect x="1" y="1" width="13" height="6" fill="#006000"/><path d="M1.500 5l2-3l2 3l2-3l2 3l2-3l2 3" fill="none" stroke="#60e060" stroke-width="1"/><path d="M2 10.500h11" stroke="#000" stroke-dasharray="1.500 1.500"/><path d="M1.500 12.500h12" stroke="#fff"/></svg>
<svg style="left:1258px;top:162px" width="15" height="14" viewBox="0 0 15 14"><rect x="0.500" y="0.500" width="14" height="13" fill="#e8e8e8" stroke="#b0b0b0"/><rect x="1.500" y="1.500" width="4.500" height="4.500" fill="#fff" stroke="#000"/><rect x="9.500" y="1.500" width="4.500" height="4.500" fill="#fff" stroke="#000"/><path d="M3 5l2-2M11 3l2 2" stroke="#000" stroke-width="0.800"/><path d="M1.500 10.500h4M9.500 10.500h4" stroke="#000" stroke-width="1.600" stroke-dasharray="1.500 1"/></svg>
<svg style="left:1258px;top:184px" width="15" height="14" viewBox="0 0 15 14"><rect x="0.500" y="0.500" width="14" height="13" fill="#e8e8e8" stroke="#a0a0a0"/><rect x="1" y="1" width="13" height="6" fill="#e8e0f0"/><path d="M1.500 2.5l2-3l2 3l2-3l2 3l2-3l2 3" fill="none" stroke="#2020c0" stroke-width="1"/><path d="M1.500 5.5l2-3l2 3l2-3l2 3l2-3l2 3" fill="none" stroke="#e02020" stroke-width="1"/><path d="M1.500 11.500h4" stroke="#000" stroke-width="1.600" stroke-dasharray="1.500 1"/><circle cx="12.500" cy="2.500" r="1" fill="#e02020"/><circle cx="12.500" cy="6" r="1" fill="#000"/><rect x="7" y="9.500" width="7" height="3" fill="#d8d8d8"/></svg>
<svg style="left:1258px;top:206px" width="15" height="14" viewBox="0 0 15 14"><rect x="0.500" y="0.500" width="14" height="13" fill="#e8e8e8" stroke="#a0a0a0"/><rect x="1" y="1" width="13" height="6" fill="#60c060"/><path d="M1.500 2.5l2-3l2 3l2-3l2 3l2-3l2 3" fill="none" stroke="#004000" stroke-width="1"/><rect x="1" y="5" width="13" height="3" fill="#f0b0b0"/><path d="M1.500 5.5l2-3l2 3l2-3l2 3l2-3l2 3" fill="none" stroke="#e02020" stroke-width="1"/><path d="M1.500 11.500h11" stroke="#000" stroke-width="1.600" stroke-dasharray="1.500 1"/><circle cx="12.500" cy="2.500" r="1" fill="#e02020"/></svg>
<svg style="left:1258px;top:228px" width="15" height="14" viewBox="0 0 15 14"><rect x="0.500" y="0.500" width="14" height="13" fill="#e8e8e8" stroke="#a0a0a0"/><rect x="1" y="1" width="13" height="6" fill="#20a040"/><path d="M2 3h3l2 3h4" fill="none" stroke="#003000"/><path d="M2 5.500l4-3l3 3" fill="none" stroke="#80ff80"/><path d="M1.500 11.500h11" stroke="#000" stroke-width="1.600" stroke-dasharray="1.500 1"/><rect x="12" y="2" width="2" height="5" fill="#e8e8e8"/></svg>
<svg style="left:1258px;top:250px" width="15" height="14" viewBox="0 0 15 14"><rect x="0.500" y="0.500" width="14" height="13" fill="#e8e8e8" stroke="#a0a0a0"/><rect x="1" y="1" width="13" height="6" fill="#002000"/><text x="7.500" y="7" font-size="6.500" font-weight="bold" fill="#40ff40" text-anchor="middle" font-family="Liberation Sans, sans-serif" textLength="11">123</text><path d="M3 10.500h1M6 10.500h1M3 12.500h1M6 12.500h1" stroke="#000"/><circle cx="11" cy="11.500" r="1.200" fill="#000"/></svg>
<svg style="left:1258px;top:272px" width="15" height="14" viewBox="0 0 15 14"><rect x="0.500" y="0.500" width="14" height="13" fill="#e8e8e8" stroke="#a0a0a0"/><rect x="1" y="1" width="13" height="6" fill="#004000"/><text x="7.500" y="7" font-size="6.500" font-weight="bold" fill="#40ff40" text-anchor="middle" font-family="Liberation Sans, sans-serif" textLength="12">1010</text><path d="M2 10h11M2 12.500h11" stroke="#000" stroke-dasharray="1 1.500"/></svg>
<svg style="left:1258px;top:294px" width="15" height="14" viewBox="0 0 15 14"><rect x="0.500" y="0.500" width="14" height="13" fill="#e8e8e8" stroke="#a0a0a0"/><rect x="3" y="1" width="11" height="12" fill="#101010"/><path d="M3 4h2v-2h3v2h3v-2h3v3h-11z" fill="#e02060"/><path d="M3 8h2v-1h2v1h2v-1h2v1h3" fill="none" stroke="#20d0d0" stroke-width="1.600"/><path d="M3 11h2v-1h2v1h2v-1h2v1h3" fill="none" stroke="#20c040" stroke-width="1.300"/><path d="M1.500 2v10" stroke="#000" stroke-dasharray="1 1"/></svg>
<svg style="left:1258px;top:316px" width="15" height="14" viewBox="0 0 15 14"><rect x="0.500" y="0.500" width="14" height="13" fill="#e8e8e8" stroke="#a0a0a0"/><rect x="1" y="1" width="13" height="7.500" fill="#003020"/><path d="M1.500 2.500h3q2 1.500 0 3h-3M6.500 4h2" fill="none" stroke="#40e0e0" stroke-width="1.200"/><text x="11" y="7.500" font-size="6" font-weight="bold" fill="#40ff40" text-anchor="middle" font-family="Liberation Sans, sans-serif">01</text><path d="M4 10h7M2 12.500h11" stroke="#000" stroke-dasharray="1 1.500"/></svg>
<svg style="left:1258px;top:338px" width="15" height="14" viewBox="0 0 15 14"><rect x="0.500" y="0.500" width="14" height="13" fill="#e8e8e8" stroke="#a0a0a0"/><rect x="1" y="1" width="13" height="6" fill="#102040"/><path d="M1.500 3q4-3 6 0t5 0" fill="none" stroke="#4060ff" stroke-width="1.200"/><path d="M1.500 5.500q4-2 6 0t5 0" fill="none" stroke="#e03030"/><path d="M5 11.500h8" stroke="#000" stroke-width="1.600" stroke-dasharray="1.500 1"/><rect x="12" y="1.500" width="2" height="5" fill="#e8e8e8"/></svg>
<svg style="left:1258px;top:360px" width="15" height="14" viewBox="0 0 15 14"><rect x="0.500" y="0.500" width="14" height="13" fill="#e8e8e8" stroke="#a0a0a0"/><rect x="1" y="1" width="13" height="6" fill="#001000"/><text x="13.500" y="6.800" font-size="6.500" font-weight="bold" fill="#40ff40" text-anchor="end" font-family="Liberation Sans, sans-serif">.04</text><path d="M3 9.500h6" stroke="#000" stroke-dasharray="1 1.500"/><path d="M10 12h3" stroke="#000" stroke-width="1.600" stroke-dasharray="1.500 1"/></svg>
<svg style="left:1258px;top:382px" width="15" height="14" viewBox="0 0 15 14"><rect x="0.500" y="0.500" width="14" height="13" fill="#e8e8e8" stroke="#a0a0a0"/><rect x="1" y="1" width="13" height="6" fill="#006000"/><path d="M2.500 7v-2M4.500 7v-4M6.500 7v-3M8.500 7v-5M10.500 7v-4M12.500 7v-2" stroke="#60ff60" stroke-width="1.200"/><path d="M2 9.500h4" stroke="#000" stroke-dasharray="1 1.500"/><path d="M8 12h5" stroke="#000" stroke-width="1.600" stroke-dasharray="1.500 1"/></svg>
<svg style="left:1258px;top:404px" width="15" height="14" viewBox="0 0 15 14"><rect x="0.500" y="0.500" width="14" height="13" fill="#e8e8e8" stroke="#a0a0a0"/><rect x="1" y="1" width="13" height="7.500" fill="#30c040"/><circle cx="4.500" cy="4.500" r="2.500" fill="none" stroke="#003000"/><circle cx="8.500" cy="4.500" r="2.500" fill="none" stroke="#003000"/><path d="M2 2l9 5M2 7l9-5" stroke="#003000" stroke-width="0.700"/><path d="M8 12h5" stroke="#000" stroke-width="1.600" stroke-dasharray="1.500 1"/><rect x="12" y="1" width="2" height="7" fill="#e8e8e8"/><path d="M13 2v5" stroke="#000" stroke-dasharray="1 1"/></svg>
<svg style="left:1258px;top:426px" width="15" height="14" viewBox="0 0 15 14"><rect x="0.500" y="0.500" width="14" height="13" fill="#e8e8e8" stroke="#a0a0a0"/><rect x="1" y="1" width="13" height="6" fill="#007000"/><path d="M1.500 3.5l2-3l2 3l2-3l2 3l2-3l2 3" fill="none" stroke="#80ff80" stroke-width="1"/><text x="0" y="14" font-size="8.500" font-weight="bold" fill="#0000c0" font-family="Liberation Sans, sans-serif" textLength="11">AG</text><path d="M13 8v6" stroke="#000" stroke-dasharray="1 1"/></svg>
<svg style="left:1258px;top:448px" width="15" height="14" viewBox="0 0 15 14"><rect x="0.500" y="0.500" width="14" height="13" fill="#e8e8e8" stroke="#a0a0a0"/><rect x="1.500" y="1.500" width="9" height="6" fill="#fff" stroke="#000"/><path d="M3 7l6-5" stroke="#0000c0"/><circle cx="13" cy="4" r="1.200" fill="#000"/><text x="3.500" y="14" font-size="8.500" font-weight="bold" fill="#0000c0" font-family="Liberation Sans, sans-serif" textLength="11">AG</text><path d="M1.500 10v3" stroke="#000" stroke-dasharray="1 1"/></svg>
<svg style="left:1258px;top:470px" width="15" height="14" viewBox="0 0 15 14"><rect x="0.500" y="0.500" width="14" height="13" fill="#e8e8e8" stroke="#a0a0a0"/><rect x="1" y="1" width="13" height="6" fill="#f0d8e8"/><path d="M1.500 2.5l2-3l2 3l2-3l2 3l2-3l2 3" fill="none" stroke="#2020c0" stroke-width="1"/><path d="M1.500 5l2-3l2 3l2-3l2 3l2-3l2 3" fill="none" stroke="#e02020" stroke-width="1"/><text x="4" y="14" font-size="8.500" font-weight="bold" fill="#0000c0" font-family="Liberation Sans, sans-serif" textLength="11">AG</text><path d="M1 11.500h3" stroke="#000" stroke-width="1.600" stroke-dasharray="1.500 1"/><circle cx="13" cy="2.500" r="1" fill="#e02020"/><circle cx="13" cy="5.500" r="1" fill="#000"/></svg>
<svg style="left:1258px;top:492px" width="15" height="14" viewBox="0 0 15 14"><rect x="0.500" y="0.500" width="14" height="13" fill="#e8e8e8" stroke="#a0a0a0"/><rect x="1" y="1" width="13" height="6" fill="#f0d8e8"/><path d="M1.500 2.5l2-3l2 3l2-3l2 3l2-3l2 3" fill="none" stroke="#2020c0" stroke-width="1"/><path d="M1.500 5l2-3l2 3l2-3l2 3l2-3l2 3" fill="none" stroke="#e02020" stroke-width="1"/><rect x="6" y="9" width="8" height="4" fill="#f0f080"/><path d="M1.500 11.500h3" stroke="#000" stroke-width="1.600" stroke-dasharray="1.500 1"/><circle cx="13" cy="2.500" r="1" fill="#e02020"/><circle cx="13" cy="5.500" r="1" fill="#000"/></svg>
<div style="left:1253px;top:974px;width:27px;height:1px;background:#808080"></div>
<div style="left:1253px;top:975px;width:27px;height:1px;background:#fff"></div>
<div style="left:1256px;top:513px;width:22px;height:1px;background:#808080"></div>
<div style="left:1256px;top:514px;width:22px;height:1px;background:#fff"></div>
<svg style="left:1257px;top:520px" width="17" height="16" viewBox="0 0 17 16"><path d="M1.500 0.500h3l2 4h7.500q2 0 2 2v5q0 2-2 2h-11q-2 0-2-2z" fill="#f8f840" stroke="#808000"/><text x="8" y="12" font-size="7.500" font-weight="bold" text-anchor="middle" font-family="Liberation Sans, sans-serif" textLength="12">1.4v</text></svg>
<svg style="left:1262px;top:540px" width="8" height="9" viewBox="0 0 8 9"><path d="M2 1v7l4-3.500z" fill="#000"/></svg>
<svg style="left:1256px;top:555px" width="18" height="16" viewBox="0 0 18 16"><rect x="2.500" y="0.500" width="13" height="15" fill="#102030" stroke="#000"/><path d="M3 2.500h12M3 13.500h12" stroke="#c0c0c0" stroke-dasharray="1 1"/><path d="M6 4v8l7-4z" fill="#f8e820" stroke="#000" stroke-width="0.800"/><path d="M0 6.500h5M0 9.500h5" stroke="#2040e0" stroke-width="1.300"/><path d="M12 8h6" stroke="#e02020" stroke-width="1.300"/></svg>
<svg style="left:1262px;top:574px" width="8" height="9" viewBox="0 0 8 9"><path d="M2 1v7l4-3.500z" fill="#000"/></svg>
<svg style="left:1256px;top:588px" width="18" height="18" viewBox="0 0 18 18"><path d="M6.500 6.500a4 4.500 0 1 0 3 7.500" fill="none" stroke="#c00000" stroke-width="3"/><path d="M8 8l4-3l3-3M11 6l3 1M10 9l2 2l3 1" fill="none" stroke="#000" stroke-width="1.700"/></svg>
<div class="r" style="left:628px;top:177px;width:182px;height:152px;"></div>
<div style="left:632px;top:181px;width:174px;height:18px;background:linear-gradient(90deg,#808080,#C0C0C0)"></div>
<svg style="left:634px;top:182px" width="16" height="16" viewBox="0 0 16 16"><path d="M1 8 L9 2.5 L15 4.5 L7 11 Z" fill="#30308a"/><path d="M3 7.7 L10 3 M5 8.8 L12 3.8 M7 9.8 L13.5 4.6 M3.5 6 L9 9 M6 4.3 L11.5 7 M8.5 3 L13.5 5.5" stroke="#d0d0ee" stroke-width="0.8" fill="none"/></svg>
<span class="t" style="font-size:11px;color:#D4D0C8;font-weight:bold;letter-spacing:0.84px;left:652.5px;top:185px;line-height:11px;">Wattmeter-XWM2</span>
<div class="r" style="left:788px;top:183px;width:16px;height:14px;"><svg style="left:0;top:0" width="16" height="14"><path d="M4 3 L11 10 M5 3 L12 10 M11 3 L4 10 M12 3 L5 10" stroke="#000" stroke-width="1" fill="none" shape-rendering="crispEdges"/></svg></div>
<div style="left:633px;top:204px;width:171px;height:31px;background:#D4D0C8;box-shadow:inset -1px -1px #404040,inset 1px 1px #fff,inset -2px -2px #808080"></div>
<div style="left:635px;top:206px;width:164px;height:24px;background:#000;box-shadow:2px 2px 0 #fff,-1px -1px 0 #404040"></div>
<span class="t" style="font-size:16px;color:#fff;letter-spacing:-0.08px;left:680.5px;top:211px;line-height:16px;text-shadow:none;">-404.018 W</span>
<span class="t" style="font-size:11px;color:#000;letter-spacing:-0.12px;left:638.5px;top:245px;line-height:11px;">Power Factor:</span>
<div class="s" style="left:722px;top:240px;width:82px;height:20px;background:#fff"></div>
<div style="left:724px;top:242px;width:77px;height:15px;background:#000"></div>
<span class="t" style="font-size:11px;color:#fff;letter-spacing:-0.13px;left:751.5px;top:245px;line-height:11px;">0.835</span>
<span class="t" style="font-size:11px;color:#000;letter-spacing:-0.12px;left:646.5px;top:270px;line-height:11px;">Voltage</span>
<span class="t" style="font-size:11px;color:#000;letter-spacing:-0.11px;left:752.0px;top:270px;line-height:11px;">Current</span>
<div style="left:643.5px;top:293px;width:7px;height:1px;background:#000"></div>
<div style="left:646.5px;top:290px;width:1px;height:7px;background:#000"></div>
<div style="left:749px;top:293px;width:7px;height:1px;background:#000"></div>
<div style="left:752px;top:290px;width:1px;height:7px;background:#000"></div>
<div style="left:680px;top:293px;width:6px;height:1px;background:#000"></div>
<div style="left:783.5px;top:293px;width:6px;height:1px;background:#000"></div>
<svg style="left:638.5px;top:299px" width="14" height="14" viewBox="-7 -7 14 14"><circle r="5" fill="#D4D0C8"/><path d="M-4.1 4.1 A5.8 5.8 0 0 1 4.1 -4.1" fill="none" stroke="#808080" stroke-width="1"/><path d="M-3.4 3.4 A4.8 4.8 0 0 1 3.4 -3.4" fill="none" stroke="#404040" stroke-width="1"/><path d="M4.1 -4.1 A5.8 5.8 0 0 1 -4.1 4.1" fill="none" stroke="#fff" stroke-width="1.2"/><circle r="1.8" fill="#808080"/></svg>
<svg style="left:674.5px;top:299px" width="14" height="14" viewBox="-7 -7 14 14"><circle r="5" fill="#D4D0C8"/><path d="M-4.1 4.1 A5.8 5.8 0 0 1 4.1 -4.1" fill="none" stroke="#808080" stroke-width="1"/><path d="M-3.4 3.4 A4.8 4.8 0 0 1 3.4 -3.4" fill="none" stroke="#404040" stroke-width="1"/><path d="M4.1 -4.1 A5.8 5.8 0 0 1 -4.1 4.1" fill="none" stroke="#fff" stroke-width="1.2"/><circle r="1.8" fill="#808080"/></svg>
<svg style="left:744px;top:299px" width="14" height="14" viewBox="-7 -7 14 14"><circle r="5" fill="#D4D0C8"/><path d="M-4.1 4.1 A5.8 5.8 0 0 1 4.1 -4.1" fill="none" stroke="#808080" stroke-width="1"/><path d="M-3.4 3.4 A4.8 4.8 0 0 1 3.4 -3.4" fill="none" stroke="#404040" stroke-width="1"/><path d="M4.1 -4.1 A5.8 5.8 0 0 1 -4.1 4.1" fill="none" stroke="#fff" stroke-width="1.2"/><circle r="1.8" fill="#808080"/></svg>
<svg style="left:779px;top:299px" width="14" height="14" viewBox="-7 -7 14 14"><circle r="5" fill="#D4D0C8"/><path d="M-4.1 4.1 A5.8 5.8 0 0 1 4.1 -4.1" fill="none" stroke="#808080" stroke-width="1"/><path d="M-3.4 3.4 A4.8 4.8 0 0 1 3.4 -3.4" fill="none" stroke="#404040" stroke-width="1"/><path d="M4.1 -4.1 A5.8 5.8 0 0 1 -4.1 4.1" fill="none" stroke="#fff" stroke-width="1.2"/><circle r="1.8" fill="#808080"/></svg>
<svg style="left:795px;top:314px" width="12" height="12" shape-rendering="crispEdges"><rect x="9" y="1" width="2" height="2" fill="#fff"/><rect x="8" y="0" width="2" height="2" fill="#808080"/><rect x="5" y="5" width="2" height="2" fill="#fff"/><rect x="4" y="4" width="2" height="2" fill="#808080"/><rect x="9" y="5" width="2" height="2" fill="#fff"/><rect x="8" y="4" width="2" height="2" fill="#808080"/><rect x="1" y="9" width="2" height="2" fill="#fff"/><rect x="0" y="8" width="2" height="2" fill="#808080"/><rect x="5" y="9" width="2" height="2" fill="#fff"/><rect x="4" y="8" width="2" height="2" fill="#808080"/><rect x="9" y="9" width="2" height="2" fill="#fff"/><rect x="8" y="8" width="2" height="2" fill="#808080"/></svg>
<div class="r" style="left:567px;top:394px;width:561px;height:441px;"></div>
<div style="left:571px;top:398px;width:553px;height:18px;background:linear-gradient(90deg,#0A246A,#A6CAF0)"></div>
<svg style="left:573px;top:399px" width="16" height="16" viewBox="0 0 16 16"><path d="M1 8 L9 2.5 L15 4.5 L7 11 Z" fill="#1a3a8a"/><path d="M3 7.7 L10 3 M5 8.8 L12 3.8 M7 9.8 L13.5 4.6 M3.5 6 L9 9 M6 4.3 L11.5 7 M8.5 3 L13.5 5.5" stroke="#e8e8ff" stroke-width="0.8" fill="none"/></svg>
<span class="t" style="font-size:11px;color:#fff;font-weight:bold;letter-spacing:0.07px;left:591.0px;top:402px;line-height:11px;">Oscilloscope-XSC2</span>
<div class="r" style="left:1106px;top:400px;width:16px;height:14px;"><svg style="left:0;top:0" width="16" height="14"><path d="M4 3 L11 10 M5 3 L12 10 M11 3 L4 10 M12 3 L5 10" stroke="#000" stroke-width="1" fill="none" shape-rendering="crispEdges"/></svg></div>
<div class="s" style="left:572px;top:418px;width:551px;height:249px;background:#000"></div>
<svg style="left:574px;top:420px" width="547" height="245" viewBox="574 420 547 245">
<rect x="574" y="420" width="547" height="245" fill="#000"/>
<g shape-rendering="crispEdges" fill="none">
<path d="M635.5 429V657" stroke="#e8e8e8" stroke-width="1" stroke-dasharray="3 3"/>
<path d="M688.5 429V657" stroke="#e8e8e8" stroke-width="1" stroke-dasharray="3 3"/>
<path d="M741.5 429V657" stroke="#e8e8e8" stroke-width="1" stroke-dasharray="3 3"/>
<path d="M794.5 429V657" stroke="#e8e8e8" stroke-width="1" stroke-dasharray="3 3"/>
<path d="M847.5 429V657" stroke="#e8e8e8" stroke-width="1" stroke-dasharray="3 3"/>
<path d="M900.5 429V657" stroke="#e8e8e8" stroke-width="1" stroke-dasharray="3 3"/>
<path d="M953.5 429V657" stroke="#e8e8e8" stroke-width="1" stroke-dasharray="3 3"/>
<path d="M1006.5 429V657" stroke="#e8e8e8" stroke-width="1" stroke-dasharray="3 3"/>
<path d="M1059.5 429V657" stroke="#e8e8e8" stroke-width="1" stroke-dasharray="3 3"/>
<path d="M583 466.7H1113" stroke="#e8e8e8" stroke-width="1" stroke-dasharray="3 3"/>
<path d="M583 504.9H1113" stroke="#e8e8e8" stroke-width="1" stroke-dasharray="3 3"/>
<path d="M583 581.3H1113" stroke="#e8e8e8" stroke-width="1" stroke-dasharray="3 3"/>
<path d="M583 619.5H1113" stroke="#e8e8e8" stroke-width="1" stroke-dasharray="3 3"/>
<path d="M583 428.5H1113 M583 657.5H1113" stroke="#fff" stroke-width="1"/>
</g>
<g shape-rendering="crispEdges"><path d="M583 543H1113" stroke="#fff" stroke-width="1"/><path d="M583 543.5H1113" stroke="#b0b0b0" stroke-width="1" transform="translate(0,0.5)"/><path d="M583 544.5H1113" stroke="#fff" stroke-width="1" stroke-dasharray="1 9.6"/></g>
<path d="M583 543.5 V460 L583.0 458.3 L585.0 462.2 L587.0 459.4 L589.1 463.3 L591.1 460.4 L593.1 464.4 L595.1 461.5 L597.2 465.4 L599.2 462.6 L601.2 466.5 L603.2 463.6 L605.3 467.6 L607.3 464.7 L609.3 468.6 L609.3 543.5 L625.5 543.5 L625.5 454.5 L627.5 459.2 L629.6 456.4 L631.6 460.3 L633.7 457.5 L635.7 461.4 L637.8 458.5 L639.8 462.5 L641.9 459.6 L643.9 463.5 L645.9 460.7 L648.0 464.6 L650.0 461.8 L652.1 465.7 L654.1 462.8 L656.2 466.8 L658.2 463.9 L660.3 467.8 L662.3 465.0 L662.3 543.5 L678.5 543.5 L678.5 454.5 L680.5 459.2 L682.6 456.4 L684.6 460.3 L686.7 457.5 L688.7 461.4 L690.8 458.5 L692.8 462.5 L694.9 459.6 L696.9 463.5 L698.9 460.7 L701.0 464.6 L703.0 461.8 L705.1 465.7 L707.1 462.8 L709.2 466.8 L711.2 463.9 L713.3 467.8 L715.3 465.0 L715.3 543.5 L731.5 543.5 L731.5 454.5 L733.5 459.2 L735.6 456.4 L737.6 460.3 L739.7 457.5 L741.7 461.4 L743.8 458.5 L745.8 462.5 L747.9 459.6 L749.9 463.5 L751.9 460.7 L754.0 464.6 L756.0 461.8 L758.1 465.7 L760.1 462.8 L762.2 466.8 L764.2 463.9 L766.3 467.8 L768.3 465.0 L768.3 543.5 L784.5 543.5 L784.5 454.5 L786.5 459.2 L788.6 456.4 L790.6 460.3 L792.7 457.5 L794.7 461.4 L796.8 458.5 L798.8 462.5 L800.9 459.6 L802.9 463.5 L804.9 460.7 L807.0 464.6 L809.0 461.8 L811.1 465.7 L813.1 462.8 L815.2 466.8 L817.2 463.9 L819.3 467.8 L821.3 465.0 L821.3 543.5 L837.5 543.5 L837.5 454.5 L839.5 459.2 L841.6 456.4 L843.6 460.3 L845.7 457.5 L847.7 461.4 L849.8 458.5 L851.8 462.5 L853.9 459.6 L855.9 463.5 L857.9 460.7 L860.0 464.6 L862.0 461.8 L864.1 465.7 L866.1 462.8 L868.2 466.8 L870.2 463.9 L872.3 467.8 L874.3 465.0 L874.3 543.5 L890.5 543.5 L890.5 454.5 L892.5 459.2 L894.6 456.4 L896.6 460.3 L898.7 457.5 L900.7 461.4 L902.8 458.5 L904.8 462.5 L906.9 459.6 L908.9 463.5 L910.9 460.7 L913.0 464.6 L915.0 461.8 L917.1 465.7 L919.1 462.8 L921.2 466.8 L923.2 463.9 L925.3 467.8 L927.3 465.0 L927.3 543.5 L943.5 543.5 L943.5 454.5 L945.5 459.2 L947.6 456.4 L949.6 460.3 L951.7 457.5 L953.7 461.4 L955.8 458.5 L957.8 462.5 L959.9 459.6 L961.9 463.5 L963.9 460.7 L966.0 464.6 L968.0 461.8 L970.1 465.7 L972.1 462.8 L974.2 466.8 L976.2 463.9 L978.3 467.8 L980.3 465.0 L980.3 543.5 L996.5 543.5 L996.5 454.5 L998.5 459.2 L1000.6 456.4 L1002.6 460.3 L1004.7 457.5 L1006.7 461.4 L1008.8 458.5 L1010.8 462.5 L1012.9 459.6 L1014.9 463.5 L1016.9 460.7 L1019.0 464.6 L1021.0 461.8 L1023.1 465.7 L1025.1 462.8 L1027.2 466.8 L1029.2 463.9 L1031.3 467.8 L1033.3 465.0 L1033.3 543.5 L1049.5 543.5 L1049.5 454.5 L1051.5 459.2 L1053.6 456.4 L1055.6 460.3 L1057.7 457.5 L1059.7 461.4 L1061.8 458.5 L1063.8 462.5 L1065.9 459.6 L1067.9 463.5 L1069.9 460.7 L1072.0 464.6 L1074.0 461.8 L1076.1 465.7 L1078.1 462.8 L1080.2 466.8 L1082.2 463.9 L1084.3 467.8 L1086.3 465.0 L1086.3 543.5" fill="none" stroke="#e01818" stroke-width="1.1"/>
<g shape-rendering="crispEdges"><path d="M582.5 424V657" stroke="#c82020" stroke-width="1"/><path d="M1113.5 424V657" stroke="#1010a0" stroke-width="2"/></g>
<path d="M576 422H590L583 429z" fill="#20d8e8"/><path d="M1106 422H1120L1113 429z" fill="#f0e020"/>
<text x="583" y="427.5" font-size="5" text-anchor="middle" font-family="Liberation Sans, sans-serif" font-weight="bold">1</text>
<text x="1113" y="427.5" font-size="5" text-anchor="middle" font-family="Liberation Sans, sans-serif" font-weight="bold">2</text>
</svg>
<div style="left:572px;top:668px;width:551px;height:13px;background:repeating-conic-gradient(#fff 0% 25%,#D4D0C8 0% 50%) 0 0/2px 2px"></div>
<div class="r" style="left:572px;top:668px;width:14px;height:13px;"><svg style="left:0;top:0" width="14" height="13"><path d="M8 3v7l-3.5-3.5z" fill="#000"/></svg></div>
<div class="r" style="left:1007px;top:668px;width:100px;height:13px;"></div>
<div class="r" style="left:1107px;top:668px;width:16px;height:13px;"><svg style="left:0;top:0" width="16" height="13"><path d="M6 3v7l3.5-3.5z" fill="#000"/></svg></div>
<div style="left:571px;top:685px;width:60px;height:59px;box-shadow:inset 1px 1px #fff,inset -1px -1px #808080"></div>
<span class="t" style="font-size:11px;color:#000;left:577.0px;top:695px;line-height:11px;">T1</span>
<span class="t" style="font-size:11px;color:#000;left:577.0px;top:709px;line-height:11px;">T2</span>
<span class="t" style="font-size:11px;color:#000;transform:scaleX(0.920);transform-origin:0 0;left:577.0px;top:729px;line-height:11px;">T2-T1</span>
<div class="r" style="left:596px;top:691px;width:15px;height:17px;"><svg style="left:0;top:1px" width="15" height="16"><path d="M3 8l5-5v3h5v4h-5v3z" fill="#000"/></svg></div>
<div class="r" style="left:613px;top:691px;width:15px;height:17px;"><svg style="left:0;top:1px" width="15" height="16"><path d="M12 8l-5-5v3h-5v4h5v3z" fill="#000"/></svg></div>
<div class="r" style="left:596px;top:709px;width:15px;height:16px;"><svg style="left:0;top:0px" width="15" height="16"><path d="M3 8l5-5v3h5v4h-5v3z" fill="#000"/></svg></div>
<div class="r" style="left:613px;top:709px;width:15px;height:16px;"><svg style="left:0;top:0px" width="15" height="16"><path d="M12 8l-5-5v3h-5v4h5v3z" fill="#000"/></svg></div>
<div class="s" style="left:632px;top:686px;width:323px;height:56px;background:#fff"></div>
<span class="t" style="font-size:11px;color:#000;transform:scaleX(0.874);transform-origin:0 0;left:657.3px;top:689px;line-height:11px;">Time</span>
<span class="t" style="font-size:11px;color:#000;transform:scaleX(0.937);transform-origin:0 0;left:722.0px;top:689px;line-height:11px;">Channel_A</span>
<span class="t" style="font-size:11px;color:#000;transform:scaleX(0.937);transform-origin:0 0;left:801.5px;top:689px;line-height:11px;">Channel_B</span>
<span class="t" style="font-size:11px;color:#000;transform:scaleX(0.950);transform-origin:0 0;left:645.0px;top:702px;line-height:11px;">4.950 ms</span>
<span class="t" style="font-size:11px;color:#000;transform:scaleX(0.949);transform-origin:0 0;left:728.5px;top:702px;line-height:11px;">1.093 V</span>
<div class="r" style="left:961px;top:691px;width:63px;height:22px;"></div>
<span class="t" style="font-size:11px;color:#000;transform:scaleX(0.952);transform-origin:0 0;left:973.0px;top:697px;line-height:11px;">Reverse</span>
<div class="r" style="left:961px;top:719px;width:63px;height:22px;"></div>
<span class="t" style="font-size:11px;color:#000;transform:scaleX(0.957);transform-origin:0 0;left:980.5px;top:725px;line-height:11px;">Save</span>
<span class="t" style="font-size:11px;color:#000;letter-spacing:-0.02px;left:1032.5px;top:735px;line-height:11px;">Ext. Trigger</span>
<svg style="left:1094px;top:733.5px" width="14" height="14" viewBox="-7 -7 14 14"><circle r="5" fill="#D4D0C8"/><path d="M-4.1 4.1 A5.8 5.8 0 0 1 4.1 -4.1" fill="none" stroke="#808080" stroke-width="1"/><path d="M-3.4 3.4 A4.8 4.8 0 0 1 3.4 -3.4" fill="none" stroke="#404040" stroke-width="1"/><path d="M4.1 -4.1 A5.8 5.8 0 0 1 -4.1 4.1" fill="none" stroke="#fff" stroke-width="1.2"/></svg>
<div style="left:572px;top:758px;width:126px;height:73px;box-shadow:inset 1px 1px #808080,inset -1px -1px #fff,inset 2px 2px #fff, inset -2px -2px #808080"></div>
<div style="left:578px;top:755px;width:48px;height:10px;background:#D4D0C8"></div>
<span class="t" style="font-size:11px;color:#000;transform:scaleX(0.919);transform-origin:0 0;left:580.0px;top:754px;line-height:11px;">Timebase</span>
<div style="left:700px;top:758px;width:118px;height:73px;box-shadow:inset 1px 1px #808080,inset -1px -1px #fff,inset 2px 2px #fff, inset -2px -2px #808080"></div>
<div style="left:706.5px;top:755px;width:52px;height:10px;background:#D4D0C8"></div>
<span class="t" style="font-size:11px;color:#000;transform:scaleX(0.946);transform-origin:0 0;left:708.5px;top:754px;line-height:11px;">Channel A</span>
<div style="left:819px;top:758px;width:127px;height:73px;box-shadow:inset 1px 1px #808080,inset -1px -1px #fff,inset 2px 2px #fff, inset -2px -2px #808080"></div>
<div style="left:826px;top:755px;width:52px;height:10px;background:#D4D0C8"></div>
<span class="t" style="font-size:11px;color:#000;transform:scaleX(0.934);transform-origin:0 0;left:828.0px;top:754px;line-height:11px;">Channel B</span>
<div style="left:947px;top:758px;width:175px;height:73px;box-shadow:inset 1px 1px #808080,inset -1px -1px #fff,inset 2px 2px #fff, inset -2px -2px #808080"></div>
<div style="left:954px;top:755px;width:36px;height:10px;background:#D4D0C8"></div>
<span class="t" style="font-size:11px;color:#000;transform:scaleX(0.929);transform-origin:0 0;left:956.0px;top:754px;line-height:11px;">Trigger</span>
<span class="t" style="font-size:11px;color:#000;transform:scaleX(0.872);transform-origin:0 0;left:577.0px;top:771px;line-height:11px;">Scale</span>
<div class="s" style="left:610px;top:765px;width:84px;height:18px;background:#fff"></div>
<span class="t" style="font-size:11px;color:#000;transform:scaleX(0.962);transform-origin:0 0;left:616.0px;top:769px;line-height:11px;">100 us/Div</span>
<span class="t" style="font-size:11px;color:#000;transform:scaleX(0.952);transform-origin:0 0;left:577.0px;top:791px;line-height:11px;">X position</span>
<div class="s" style="left:632px;top:786px;width:62px;height:18px;background:#fff"></div>
<span class="t" style="font-size:11px;color:#000;left:638.0px;top:790px;line-height:11px;">0</span>
<div class="s" style="left:578px;top:808px;width:26px;height:19px;background:repeating-conic-gradient(#fff 0% 25%,#D4D0C8 0% 50%) 0 0/2px 2px"></div>
<span class="t" style="font-size:11px;color:#000;transform:scaleX(0.877);transform-origin:0 0;left:583.5px;top:813px;line-height:11px;">Y/T</span>
<div class="r" style="left:604px;top:808px;width:26px;height:19px;"></div>
<span class="t" style="font-size:11px;color:#000;letter-spacing:-0.29px;left:607.5px;top:813px;line-height:11px;">Add</span>
<div class="r" style="left:632px;top:808px;width:28px;height:19px;"></div>
<span class="t" style="font-size:11px;color:#000;transform:scaleX(0.959);transform-origin:0 0;left:637.5px;top:813px;line-height:11px;">B/A</span>
<div class="r" style="left:661px;top:808px;width:28px;height:19px;"></div>
<span class="t" style="font-size:11px;color:#000;transform:scaleX(0.959);transform-origin:0 0;left:666.5px;top:813px;line-height:11px;">A/B</span>
<span class="t" style="font-size:11px;color:#000;transform:scaleX(0.872);transform-origin:0 0;left:702.5px;top:771px;line-height:11px;">Scale</span>
<div class="s" style="left:734px;top:765px;width:82px;height:18px;background:#fff"></div>
<span class="t" style="font-size:11px;color:#000;transform:scaleX(0.950);transform-origin:0 0;left:738.0px;top:769px;line-height:11px;">500 mV/Div</span>
<span class="t" style="font-size:11px;color:#000;transform:scaleX(0.956);transform-origin:0 0;left:702.5px;top:791px;line-height:11px;">Y position</span>
<div class="s" style="left:756px;top:786px;width:41px;height:18px;background:#fff"></div>
<span class="t" style="font-size:11px;color:#000;left:764.0px;top:790px;line-height:11px;">0</span>
<div style="left:760px;top:789px;width:1px;height:12px;background:#000"></div>
<div class="r" style="left:798px;top:786px;width:19px;height:9px;"><svg style="left:0;top:0" width="19" height="9"><path d="M7 6h5l-2.5-3z" fill="#000"/></svg></div>
<div class="r" style="left:798px;top:795px;width:19px;height:9px;"><svg style="left:0;top:0" width="19" height="9"><path d="M7 3h5l-2.5 3z" fill="#000"/></svg></div>
<div class="r" style="left:703px;top:808px;width:23px;height:19px;"></div>
<span class="t" style="font-size:11px;color:#000;left:706.9px;top:813px;line-height:11px;">AC</span>
<div class="r" style="left:728px;top:808px;width:22px;height:19px;"></div>
<span class="t" style="font-size:11px;color:#000;left:735.9px;top:813px;line-height:11px;">0</span>
<div class="s" style="left:751px;top:808px;width:24px;height:19px;background:repeating-conic-gradient(#fff 0% 25%,#D4D0C8 0% 50%) 0 0/2px 2px"></div>
<span class="t" style="font-size:11px;color:#000;left:755.1px;top:813px;line-height:11px;">DC</span>
<svg style="left:798.5px;top:809px" width="14" height="14" viewBox="-7 -7 14 14"><circle r="5" fill="#D4D0C8"/><path d="M-4.1 4.1 A5.8 5.8 0 0 1 4.1 -4.1" fill="none" stroke="#808080" stroke-width="1"/><path d="M-3.4 3.4 A4.8 4.8 0 0 1 3.4 -3.4" fill="none" stroke="#404040" stroke-width="1"/><path d="M4.1 -4.1 A5.8 5.8 0 0 1 -4.1 4.1" fill="none" stroke="#fff" stroke-width="1.2"/><circle r="1.8" fill="#808080"/></svg>
<span class="t" style="font-size:11px;color:#000;transform:scaleX(0.872);transform-origin:0 0;left:822.5px;top:771px;line-height:11px;">Scale</span>
<div class="s" style="left:857px;top:765px;width:87px;height:18px;background:#fff"></div>
<span class="t" style="font-size:11px;color:#000;transform:scaleX(0.935);transform-origin:0 0;left:862.0px;top:769px;line-height:11px;">5  V/Div</span>
<span class="t" style="font-size:11px;color:#000;transform:scaleX(0.956);transform-origin:0 0;left:822.5px;top:791px;line-height:11px;">Y position</span>
<div class="s" style="left:880px;top:786px;width:64px;height:18px;background:#fff"></div>
<span class="t" style="font-size:11px;color:#000;left:886.0px;top:790px;line-height:11px;">0</span>
<div class="r" style="left:824px;top:810px;width:23px;height:19px;"></div>
<span class="t" style="font-size:11px;color:#000;left:827.9px;top:815px;line-height:11px;">AC</span>
<div class="r" style="left:848px;top:810px;width:22px;height:19px;"></div>
<span class="t" style="font-size:11px;color:#000;left:855.9px;top:815px;line-height:11px;">0</span>
<div class="s" style="left:871px;top:810px;width:26px;height:19px;background:repeating-conic-gradient(#fff 0% 25%,#D4D0C8 0% 50%) 0 0/2px 2px"></div>
<span class="t" style="font-size:11px;color:#000;left:876.1px;top:815px;line-height:11px;">DC</span>
<div class="r" style="left:898px;top:810px;width:18px;height:19px;"></div>
<span class="t" style="font-size:11px;color:#000;left:905.2px;top:815px;line-height:11px;">-</span>
<svg style="left:930.5px;top:811px" width="14" height="14" viewBox="-7 -7 14 14"><circle r="5" fill="#D4D0C8"/><path d="M-4.1 4.1 A5.8 5.8 0 0 1 4.1 -4.1" fill="none" stroke="#808080" stroke-width="1"/><path d="M-3.4 3.4 A4.8 4.8 0 0 1 3.4 -3.4" fill="none" stroke="#404040" stroke-width="1"/><path d="M4.1 -4.1 A5.8 5.8 0 0 1 -4.1 4.1" fill="none" stroke="#fff" stroke-width="1.2"/></svg>
<span class="t" style="font-size:11px;color:#000;transform:scaleX(0.895);transform-origin:0 0;left:951.5px;top:771px;line-height:11px;">Edge</span>
<div class="s" style="left:992px;top:768px;width:20px;height:18px;background:repeating-conic-gradient(#fff 0% 25%,#D4D0C8 0% 50%) 0 0/2px 2px"></div>
<span class="t" style="font-size:11px;color:#000;left:1002.0px;top:772px;line-height:11px;"></span>
<div class="r" style="left:1014px;top:768px;width:22px;height:18px;"></div>
<span class="t" style="font-size:11px;color:#000;left:1025.0px;top:772px;line-height:11px;"></span>
<svg style="left:996px;top:771px" width="14" height="12"><path d="M2 9.5h5v-7h5 M5 7l2-3 2 3" stroke="#000" fill="none" shape-rendering="crispEdges"/></svg>
<svg style="left:1017px;top:770px" width="14" height="12"><path d="M2 2.5h5v7h5 M5 5l2 3 2-3" stroke="#000" fill="none" shape-rendering="crispEdges"/></svg>
<div class="s" style="left:1039px;top:768px;width:23px;height:18px;background:repeating-conic-gradient(#fff 0% 25%,#D4D0C8 0% 50%) 0 0/2px 2px"></div>
<span class="t" style="font-size:11px;color:#fff;left:1047.8px;top:773px;line-height:11px;">A</span>
<span class="t" style="font-size:11px;color:#808080;left:1046.8px;top:772px;line-height:11px;">A</span>
<div class="r" style="left:1064px;top:768px;width:22px;height:18px;"></div>
<span class="t" style="font-size:11px;color:#fff;left:1072.3px;top:773px;line-height:11px;">B</span>
<span class="t" style="font-size:11px;color:#808080;left:1071.3px;top:772px;line-height:11px;">B</span>
<div class="r" style="left:1087px;top:768px;width:28px;height:18px;"></div>
<span class="t" style="font-size:11px;color:#fff;left:1094.1px;top:773px;line-height:11px;">Ext</span>
<span class="t" style="font-size:11px;color:#808080;left:1093.1px;top:772px;line-height:11px;">Ext</span>
<span class="t" style="font-size:11px;color:#000;transform:scaleX(0.913);transform-origin:0 0;left:951.5px;top:791px;line-height:11px;">Level</span>
<div class="s" style="left:992px;top:789px;width:89px;height:18px;background:#fff"></div>
<span class="t" style="font-size:11px;color:#000;left:997.5px;top:794px;line-height:11px;">0</span>
<div class="s" style="left:1083px;top:789px;width:31px;height:18px;background:#fff"></div>
<span class="t" style="font-size:11px;color:#000;left:1089.5px;top:794px;line-height:11px;">V</span>
<span class="t" style="font-size:11px;color:#000;transform:scaleX(0.922);transform-origin:0 0;left:951.5px;top:813px;line-height:11px;">Type</span>
<div class="r" style="left:982px;top:808px;width:32px;height:19px;"></div>
<span class="t" style="font-size:11px;color:#000;transform:scaleX(0.957);transform-origin:0 0;left:986.0px;top:813px;line-height:11px;">Sing.</span>
<div class="r" style="left:1016px;top:808px;width:32px;height:19px;"></div>
<span class="t" style="font-size:11px;color:#000;letter-spacing:-0.06px;left:1022.0px;top:813px;line-height:11px;">Nor.</span>
<div class="r" style="left:1048px;top:808px;width:33px;height:19px;"></div>
<span class="t" style="font-size:11px;color:#000;letter-spacing:-0.21px;left:1053.5px;top:813px;line-height:11px;">Auto</span>
<div class="s" style="left:1082px;top:808px;width:34px;height:19px;background:repeating-conic-gradient(#fff 0% 25%,#D4D0C8 0% 50%) 0 0/2px 2px"></div>
<span class="t" style="font-size:11px;color:#000;transform:scaleX(0.951);transform-origin:0 0;left:1086.5px;top:813px;line-height:11px;">None</span>
<div style="left:3px;top:951px;width:74px;height:24px;background:#D4D0C8;border-left:1px solid #fff;border-right:1px solid #404040;border-bottom:1px solid #404040;border-radius:0 0 3px 3px;box-sizing:border-box;box-shadow:inset -1px -1px #808080"></div>
<svg style="left:7px;top:955px" width="16" height="16" viewBox="0 0 16 16"><path d="M0.5 0.5h10l5 5v10h-15z" fill="#fff" stroke="#000"/><path d="M10.5 0.5v5h5" fill="#fff" stroke="#000"/><path d="M3 3.5h4v3h-4z M5 6.5v2 M3 8.5h4v4h-4z M7 5h2 M7 10.5h3" stroke="#c00000" fill="none"/></svg>
<span class="t" style="font-size:11px;color:#000;letter-spacing:-0.01px;left:26.5px;top:958px;line-height:11px;">Circuit1 *</span>
<div style="left:1220px;top:957px;width:15px;height:15px;box-shadow:inset 1px 1px #fff,inset -1px -1px #404040"><svg style="left:0;top:0" width="15" height="15"><path d="M9 3v8l-4-4z" fill="#000080"/></svg></div>
<div style="left:1235px;top:957px;width:15px;height:15px;box-shadow:inset 1px 1px #fff,inset -1px -1px #404040"><svg style="left:0;top:0" width="15" height="15"><path d="M6 3v8l4-4z" fill="#000080"/></svg></div>
<div class="ts" style="left:694px;top:978px;width:156px;height:16px;"></div>
<div class="ts" style="left:852px;top:978px;width:181px;height:16px;"></div>
<div class="ts" style="left:1035px;top:978px;width:179px;height:16px;"></div>
<span class="t" style="font-size:11px;color:#000;left:697.0px;top:981px;line-height:11px;">-</span>
<span class="t" style="font-size:11px;color:#000;letter-spacing:-0.12px;left:1037.5px;top:981px;line-height:11px;">Tran: 5.900 ms</span>
<div class="ts" style="left:1217px;top:978px;width:63px;height:16px;"></div>
<div style="left:1220px;top:980px;width:6px;height:12px;box-shadow:inset 1px 1px #808080,inset -1px -1px #fff"></div>
<div style="left:1228px;top:980px;width:6px;height:12px;box-shadow:inset 1px 1px #808080,inset -1px -1px #fff"></div>
<div style="left:1236px;top:980px;width:6px;height:12px;box-shadow:inset 1px 1px #808080,inset -1px -1px #fff"></div>
<div style="left:1244px;top:980px;width:6px;height:12px;box-shadow:inset 1px 1px #808080,inset -1px -1px #fff"></div>
<div style="left:1252px;top:980px;width:6px;height:12px;box-shadow:inset 1px 1px #808080,inset -1px -1px #fff"></div>
<div style="left:1260px;top:980px;width:6px;height:12px;box-shadow:inset 1px 1px #808080,inset -1px -1px #fff"></div>
<div style="left:1268px;top:980px;width:6px;height:12px;box-shadow:inset 1px 1px #808080,inset -1px -1px #fff"></div>
<div style="left:0px;top:994px;width:1280px;height:1px;background:#D4D0C8"></div>
<div style="left:0px;top:995px;width:1280px;height:1px;background:#fff"></div>
<div class="r" style="left:2px;top:998px;width:51px;height:22px;"></div>
<svg style="left:5px;top:1001px" width="16" height="16" viewBox="0 0 16 16"><path d="M1 3 q3-2 6 0 v4.5 q-3-2-6 0z" fill="#e84a20"/><path d="M8 3 q3 2 6 0 v4.5 q-3 2-6 0z" fill="#50b030"/><path d="M1 9 q3-2 6 0 v4.5 q-3-2-6 0z" fill="#3060d0"/><path d="M8 9 q3 2 6 0 v4.5 q-3 2-6 0z" fill="#f0c020"/></svg>
<span class="t" style="font-size:11px;color:#000;font-weight:bold;letter-spacing:0.54px;left:21.5px;top:1004px;line-height:11px;">Пуск</span>
<div style="left:59px;top:999px;width:1px;height:20px;background:#808080"></div>
<div style="left:60px;top:999px;width:1px;height:20px;background:#fff"></div>
<div style="left:145px;top:999px;width:1px;height:20px;background:#808080"></div>
<div style="left:146px;top:999px;width:1px;height:20px;background:#fff"></div>
<svg style="left:69px;top:1001px" width="16" height="16" viewBox="0 0 16 16"><rect x="1" y="2" width="14" height="12" rx="3" fill="#3a8ae0" stroke="#1a50a0"/><text x="8" y="12" font-size="10" font-weight="bold" text-anchor="middle" fill="#fff" font-family="Liberation Sans, sans-serif">e</text></svg>
<svg style="left:92px;top:1001px" width="16" height="16" viewBox="0 0 16 16"><rect x="1.5" y="2.5" width="11" height="12" fill="#fff" stroke="#606060"/><rect x="3" y="8" width="8" height="5" fill="#50b040"/><path d="M14 1 L8 10" stroke="#e0a020" stroke-width="2"/></svg>
<svg style="left:115px;top:1001px" width="16" height="16" viewBox="0 0 16 16"><circle cx="8" cy="8" r="7" fill="#f08020"/><path d="M8 1 A7 7 0 0 1 15 8 L8 8z" fill="#40a0e0"/><path d="M15 8 A7 7 0 0 1 8 15 L8 8z" fill="#50b040"/><circle cx="8" cy="8" r="4" fill="#fff"/><path d="M6.5 5.5v5l4-2.5z" fill="#202020"/></svg>
<div class="r" style="left:152px;top:998px;width:160px;height:22px;"></div>
<svg style="left:157px;top:1001px" width="16" height="16" viewBox="0 0 16 16"><path d="M1.5 4.5 L2.5 3 h4 l1 1.5 h6.5 v8 h-12.5z" fill="#f5d76a" stroke="#9a7a1a"/><path d="M1.5 12.5 l2-6 h12 l-2 6z" fill="#fbe99a" stroke="#9a7a1a"/></svg>
<span class="t" style="font-size:11px;color:#000;letter-spacing:-0.03px;left:175.5px;top:1004px;line-height:11px;">Z:\del\pwm</span>
<div class="s" style="left:315px;top:998px;width:160px;height:22px;background:repeating-conic-gradient(#fff 0% 25%,#D4D0C8 0% 50%) 0 0/2px 2px"></div>
<svg style="left:321px;top:1002px" width="16" height="16" viewBox="0 0 16 16"><path d="M1 9 L9 3 L15 5 L7 12 Z" fill="#28288c"/><path d="M3 8.5 L10 3.5 M5 9.5 L12 4.3 M7 10.5 L13.5 5 M4 6.5 L10 9.5 M6.5 4.8 L12 7.5" stroke="#d8d8f0" stroke-width="0.8" fill="none"/></svg>
<span class="t" style="font-size:11px;color:#000;font-weight:bold;letter-spacing:0.4px;left:339.5px;top:1005px;line-height:11px;">Circuit1 - Multisim - [...</span>
<div class="r" style="left:478px;top:998px;width:160px;height:22px;"></div>
<svg style="left:483px;top:1001px" width="16" height="16" viewBox="0 0 16 16"><rect x="3.5" y="1.5" width="9" height="13" rx="1" fill="#a8c0e8" stroke="#5070a0"/><rect x="5" y="3" width="6" height="3" fill="#e8f0ff"/><path d="M5 8h1.5M7.2 8h1.5M9.5 8h1.5M5 10h1.5M7.2 10h1.5M9.5 10h1.5M5 12h1.5M7.2 12h1.5M9.5 12h1.5" stroke="#4060a0"/></svg>
<span class="t" style="font-size:11px;color:#000;letter-spacing:0.26px;left:501.5px;top:1004px;line-height:11px;">Калькулятор</span>
<div class="r" style="left:641px;top:998px;width:160px;height:22px;"></div>
<svg style="left:646px;top:1001px" width="16" height="16" viewBox="0 0 16 16"><rect x="3" y="1.500" width="9" height="8" fill="#fff" stroke="#4060c0"/><rect x="5" y="3" width="5" height="4" fill="#e05050"/><rect x="1.500" y="7.500" width="13" height="6" fill="#f0d060" stroke="#907020"/><rect x="4" y="10" width="8" height="2" fill="#fff8d0"/></svg>
<span class="t" style="font-size:11px;color:#000;letter-spacing:0.0px;left:664.5px;top:1004px;line-height:11px;">C:\Documents and Settin...</span>
<div class="r" style="left:804px;top:998px;width:160px;height:22px;"></div>
<svg style="left:809px;top:1001px" width="16" height="16" viewBox="0 0 16 16"><path d="M1.5 4.5 L2.5 3 h4 l1 1.5 h6.5 v8 h-12.5z" fill="#f5d76a" stroke="#9a7a1a"/><path d="M1.5 12.5 l2-6 h12 l-2 6z" fill="#fbe99a" stroke="#9a7a1a"/></svg>
<span class="t" style="font-size:11px;color:#000;letter-spacing:-0.04px;left:827.5px;top:1004px;line-height:11px;">Z:\del\pwm\scr</span>
<div class="r" style="left:967px;top:998px;width:160px;height:22px;"></div>
<svg style="left:972px;top:1001px" width="16" height="16" viewBox="0 0 16 16"><path d="M4 7h8l-1 8h-6z" fill="#d0a060" stroke="#705020"/><path d="M5 7L3 1M8 7V0.500M11 7l2-6" stroke="#c03020" stroke-width="1.500"/><path d="M6.500 7L6 2M9.500 7l1-5" stroke="#30a040" stroke-width="1.300"/></svg>
<span class="t" style="font-size:11px;color:#000;transform:scaleX(0.945);transform-origin:0 0;left:990.5px;top:1004px;line-height:11px;">osc4.JPG - Paint</span>
<div style="left:1154px;top:999px;width:1px;height:20px;background:#808080"></div>
<div style="left:1155px;top:999px;width:1px;height:20px;background:#fff"></div>
<div class="ts" style="left:1198px;top:998px;width:79px;height:22px;"></div>
<svg style="left:1201px;top:1001px" width="16" height="16" viewBox="0 0 16 16"><ellipse cx="6.500" cy="7" rx="4.500" ry="5.500" fill="#909098" stroke="#505058"/><ellipse cx="6" cy="7" rx="2" ry="3" fill="#c8c8d0"/><path d="M11 11q3 1 3 4M12 8q3 2 3 5" stroke="#a0a8e0" fill="none"/></svg>
<svg style="left:1220px;top:1001px" width="16" height="16" viewBox="0 0 16 16"><path d="M8 1L14 4V11L8 15L2 11V4z" fill="#3858c0" stroke="#203080"/><path d="M8 1L14 4L8 7L2 4z" fill="#e8f0ff"/><path d="M8 7V15" stroke="#fff"/><path d="M10 10h5v5h-5z" fill="#f0c030"/></svg>
<span class="t" style="font-size:11px;color:#000;letter-spacing:0.2px;left:1245.0px;top:1004px;line-height:11px;">3:45</span>
</body></html>
